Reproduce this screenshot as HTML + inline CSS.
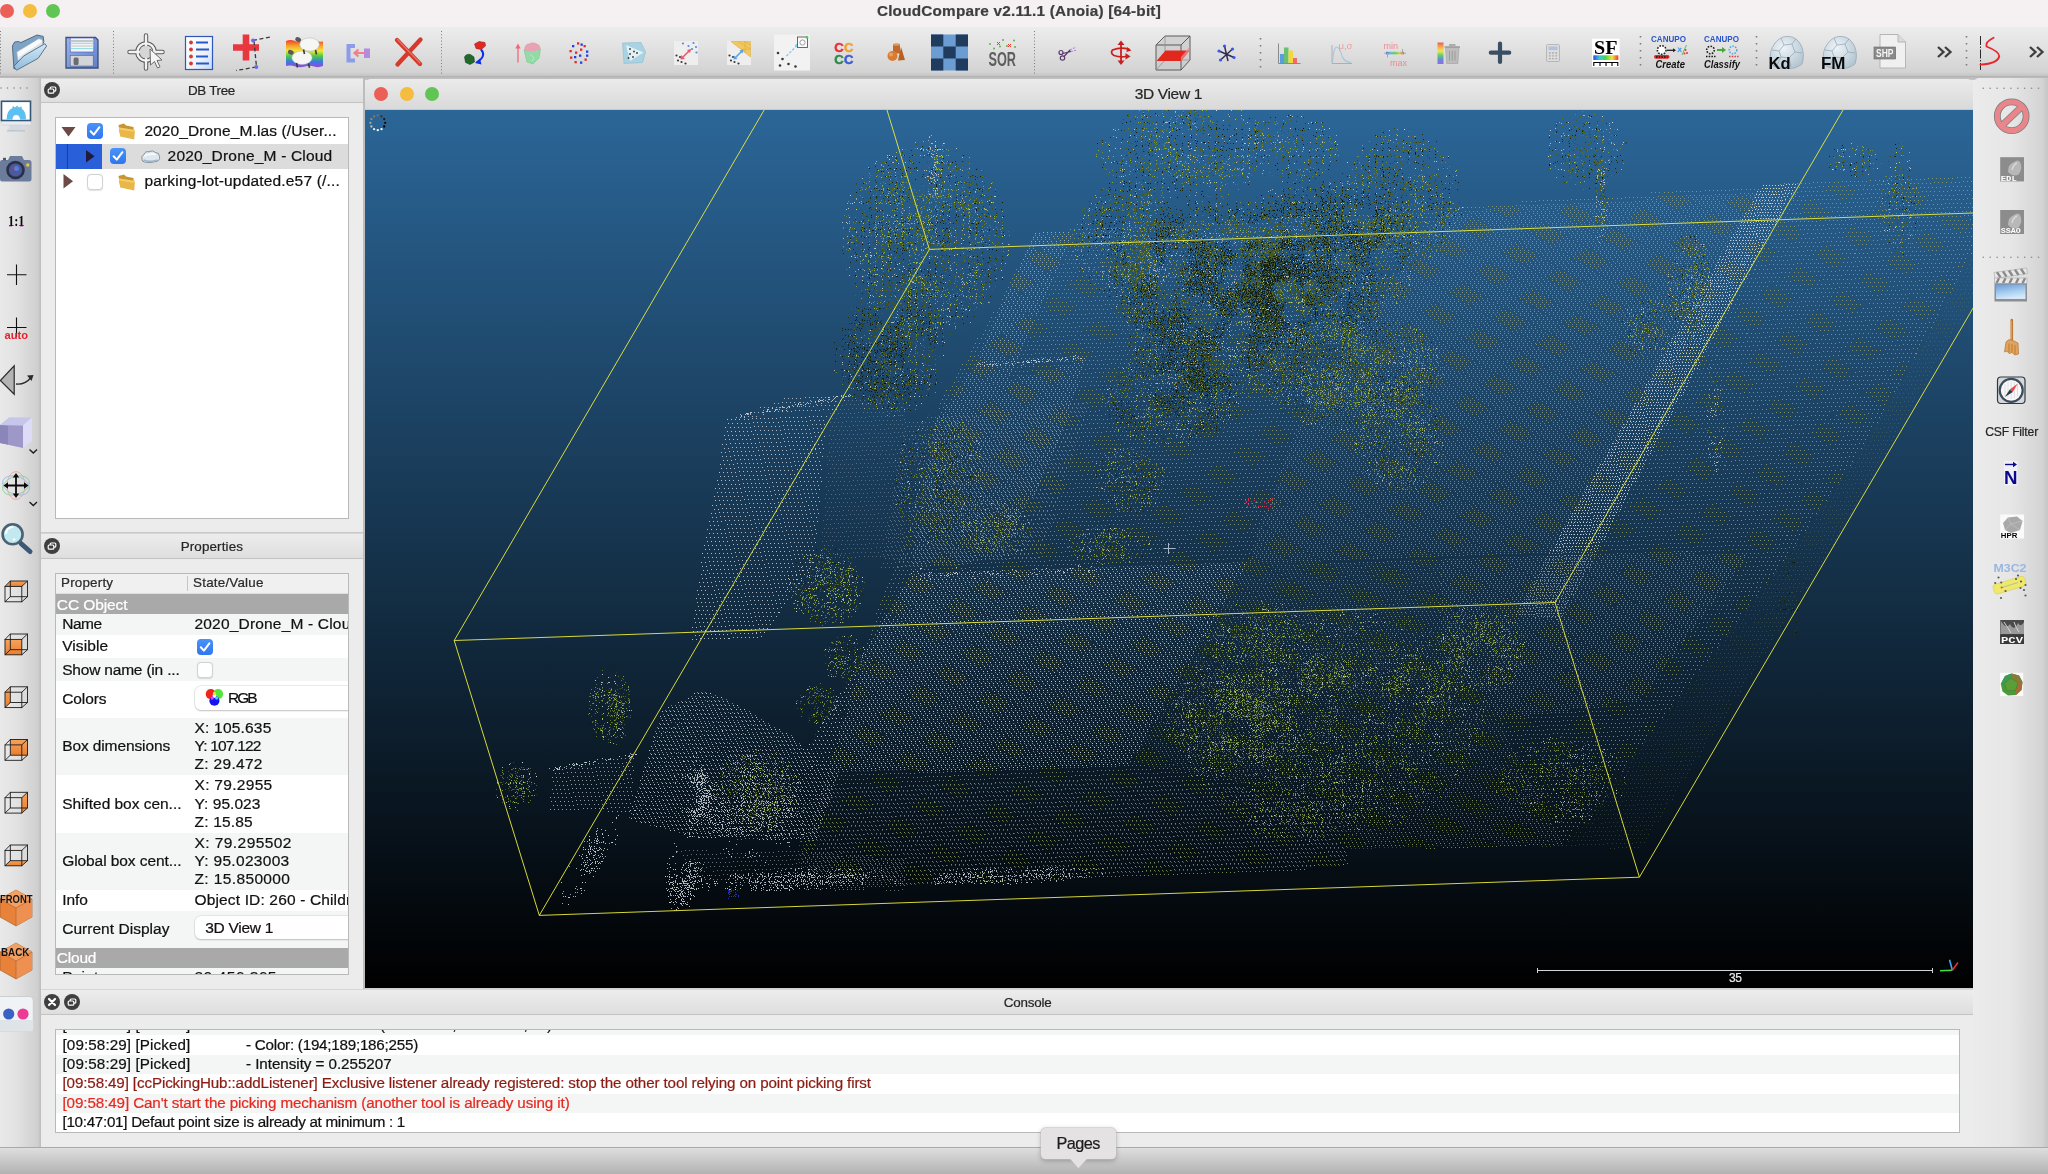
<!DOCTYPE html>
<html><head><meta charset="utf-8"><title>CloudCompare</title>
<style>
html,body{margin:0;padding:0;width:2048px;height:1174px;overflow:hidden;background:#ececec;font-family:"Liberation Sans",sans-serif;color:#1a1a1a;}
*{box-sizing:border-box;}
.abs{position:absolute;}
#titlebar{left:0;top:0;width:2048px;height:27px;background:#f5f0f2;}
#title{left:0;top:0;width:2048px;height:22px;line-height:21px;text-align:center;font-weight:bold;font-size:15.5px;color:#3c3c3c;padding-left:-12px;}
.tl{position:absolute;width:14px;height:14px;border-radius:50%;}
#toolbar{left:0;top:27px;width:2048px;height:50px;background:linear-gradient(#ececec 0%,#e2e2e2 40%,#d3d3d3 92%,#c4c4c4 100%);border-bottom:1px solid #b4b4b4;}
#lefttb{left:0;top:78px;width:41px;height:1069px;background:linear-gradient(90deg,#e9e9e9 0%,#e2e2e2 40%,#cfcfcf 92%,#bdbdbd 100%);}
#righttb{left:1974px;top:78px;width:74px;height:1069px;border-radius:5px 0 0 0;background:linear-gradient(90deg,#ebebeb 0%,#e6e6e6 50%,#d4d4d4 92%,#c6c6c6 100%);}
#statusbar{left:0;top:1147px;width:2048px;height:27px;background:linear-gradient(#dedede,#b2b2b2);border-top:1px solid #a9a9a9;}
.docktitle{position:absolute;background:linear-gradient(#ededed,#dedede);border-bottom:1px solid #c3c3c3;border-top:1px solid #d6d6d6;font-size:13px;text-align:center;color:#2a2a2a;}
.dockbtn{position:absolute;width:16px;height:16px;border-radius:50%;background:#3f3f3f;}
.box{position:absolute;background:#fff;border:1px solid #b9b9b9;overflow:hidden;}
.t{position:absolute;white-space:nowrap;line-height:1;}
.cb{position:absolute;width:16px;height:16px;border-radius:4px;}
.cb.on{background:linear-gradient(#4a93f8,#2f76f0);}
.cb.off{background:#fff;border:1px solid #d2d2d2;box-shadow:0 0.5px 1px rgba(0,0,0,.12);}
.row{position:absolute;left:0;width:292px;}
.g{background:#f4f5f5;}
.band{background:#a9a9a9;color:#fff;}
.crow{position:absolute;left:0;width:1903px;height:19.5px;}
.p{font-size:15px;color:#111;}.c{font-size:13.5px;color:#111;}</style></head>
<body>
<!-- TITLE BAR -->
<div id="titlebar" class="abs"></div>
<div class="tl" style="left:0px;top:4px;background:#ec5f57;"></div>
<div class="tl" style="left:23px;top:4px;background:#f5bd40;"></div>
<div class="tl" style="left:46px;top:4px;background:#61c554;"></div>
<!-- TOOLBAR -->
<div id="toolbar" class="abs"></div>
<svg class="abs" style="left:0;top:27px;will-change:transform" width="2048" height="50" viewBox="0 27 2048 50" font-family="Liberation Sans, sans-serif">
<defs>
<linearGradient id="gFold" x1="0" y1="0" x2="0" y2="1"><stop offset="0" stop-color="#d4e8f6"/><stop offset="1" stop-color="#8fbcdc"/></linearGradient>
<linearGradient id="gSave" x1="0" y1="0" x2="1" y2="1"><stop offset="0" stop-color="#9ab6ea"/><stop offset="1" stop-color="#5d7fc8"/></linearGradient>
<linearGradient id="gRain" x1="0" y1="0" x2="0" y2="1"><stop offset="0" stop-color="#f03a30"/><stop offset="0.2" stop-color="#f59a28"/><stop offset="0.4" stop-color="#f2e63a"/><stop offset="0.6" stop-color="#48c848"/><stop offset="0.8" stop-color="#3a78e8"/><stop offset="1" stop-color="#9a48d8"/></linearGradient>
<linearGradient id="gRainH" x1="0" y1="0" x2="1" y2="0"><stop offset="0" stop-color="#3a48e8"/><stop offset="0.25" stop-color="#38c8d8"/><stop offset="0.5" stop-color="#48d848"/><stop offset="0.75" stop-color="#f2e63a"/><stop offset="1" stop-color="#f03a30"/></linearGradient>
<radialGradient id="gBlob" cx="0.4" cy="0.35" r="0.7"><stop offset="0" stop-color="#eef4f8"/><stop offset="1" stop-color="#b4c6d2"/></radialGradient>
<linearGradient id="gList" x1="0" y1="0" x2="1" y2="1"><stop offset="0" stop-color="#ffffff"/><stop offset="0.6" stop-color="#eef3fc"/><stop offset="1" stop-color="#c4d8f6"/></linearGradient>
</defs>
<!-- separators (dotted) -->
<g stroke="#7a7a7a" stroke-width="1" stroke-dasharray="1 2.2">
<path d="M0.5 31 V75"/><path d="M113.5 31 V75"/><path d="M441.5 31 V75"/><path d="M1034.5 31 V75"/>
</g>
<g stroke="#7a7a7a" stroke-width="1.6" stroke-dasharray="1.6 5.4">
<path d="M1260.5 38 V69"/><path d="M1640.5 36 V70"/><path d="M1756.5 36 V70"/><path d="M1966.5 36 V70"/>
</g>
<!-- 1 open folder -->
<g>
<path d="M12.4 46 L14.6 42 L18.5 41.5 L20.8 42.6 L37 35 L43.2 36.4 L43.8 41.5 L42 46 L14 69 Z" fill="#7da3c6" stroke="#4a6078" stroke-width="0.9" stroke-linejoin="round"/>
<path d="M16.8 52.1 L38.7 38.7 L42.1 39.8 L42.7 44.8 L18 60.6 Z" fill="#fafbfc" stroke="#aab4be" stroke-width="0.5"/>
<path d="M18 57.5 L41.5 42.3 L42.7 44.8 L18 60.6 Z" fill="#dfe3e8"/>
<path d="M15.7 69.6 L14 66.2 L23.6 56 L44.9 43.7 L46.6 46 L38.2 58.3 L16.8 70.1 Z" fill="url(#gFold)" stroke="#4a6a88" stroke-width="0.9" stroke-linejoin="round"/>
</g>
<!-- 2 save floppy -->
<g>
<path d="M66 37.5 H95.5 L98 40 V68 H66 Z" fill="url(#gSave)" stroke="#3d4c7c" stroke-width="1.3"/>
<rect x="70.2" y="38" width="23.6" height="14" fill="#f2f4f6" stroke="#5a62c8" stroke-width="0.7"/>
<path d="M70.6 41 H93.4" stroke="#c4c8cc" stroke-width="2"/><path d="M70.6 43.3 H93.4 M70.6 48.6 H93.4" stroke="#86d6e2" stroke-width="0.9"/><path d="M70.6 46 H93.4" stroke="#d4d6d8" stroke-width="1.6"/>
<rect x="70.2" y="55.500" width="23" height="10.500" fill="#d2d4d8" stroke="#5a6484" stroke-width="0.6"/>
<rect x="73.6" y="57.400" width="5" height="7.600" rx="1.5" fill="#6a6c74"/>
</g>
<!-- 3 pick point -->
<g fill="none">
<path d="M146 35.5 V68.5 M129.5 52 H162.5" stroke="#5c5c5c" stroke-width="4.4" stroke-linecap="round"/>
<circle cx="146" cy="52" r="8.6" stroke="#5c5c5c" stroke-width="4.4"/>
<path d="M146 35.5 V68.5 M129.5 52 H162.5" stroke="#f2f2f2" stroke-width="2.4" stroke-linecap="round"/>
<circle cx="146" cy="52" r="8.6" stroke="#f2f2f2" stroke-width="2.4"/>
<circle cx="146" cy="52" r="6.2" fill="#d6d6d6" stroke="none"/>
<path d="M150 49 L150.5 65 L154.5 61.5 L157.5 68 L160 66.8 L157 60.5 L162 60 Z" fill="#f6f6f6" stroke="#6a6a6a" stroke-width="1"/>
</g>
<!-- 4 list -->
<g>
<rect x="185.5" y="36.5" width="27" height="33" fill="url(#gList)" stroke="#2f57b8" stroke-width="1.2"/>
<g fill="#d83a2a"><circle cx="191" cy="42.5" r="1.9"/><circle cx="191" cy="49.5" r="1.9"/><circle cx="191" cy="56.5" r="1.9"/><circle cx="191" cy="63.5" r="1.9"/></g>
<path d="M196 42.5 H208 M196 49.5 H209 M196 56.5 H208 M196 63.5 H209" stroke="#2857c8" stroke-width="2.2"/>
</g>
<!-- 5 red plus polyline -->
<g>
<path d="M246 34.5 V60.5 M233 47.5 H259" stroke="#e8373f" stroke-width="6.6"/>
<path d="M253 40.5 L270 37 M254 41 L256.5 67 L236 70.5" stroke="#3a3a3a" stroke-width="1.3" stroke-dasharray="4 2.6" fill="none"/>
<circle cx="253" cy="40.5" r="2" fill="#6a6af0"/><circle cx="256.3" cy="67" r="2" fill="#6a6af0"/>
</g>
<!-- 6 sheep rainbow -->
<g>
<path d="M286 41 Q290.500 39 295 41 T304 41 T313 40.500 T323 41.500 V66 Q318.500 68 314 66.500 T305 66.500 T295.500 66.500 T286 66 Z" fill="url(#gRain)"/>
<g fill="#f6f6f4" stroke="#b8b8b4" stroke-width="0.5">
<ellipse cx="309.500" cy="44.500" rx="9.800" ry="6.600"/><ellipse cx="302" cy="57.700" rx="10.200" ry="6.800"/>
</g>
<ellipse cx="298.200" cy="39.600" rx="3" ry="2.300" fill="#5a5a5a" transform="rotate(25 298.2 39.6)"/><ellipse cx="290.800" cy="52.300" rx="3" ry="2.300" fill="#5a5a5a" transform="rotate(25 290.8 52.3)"/>
<path d="M303.500 49.500 L304.500 54 M315.500 50 L316.500 54.500 M296.500 63 L297.500 67.500 M308.500 63.500 L309.500 67.800" stroke="#3a3a3a" stroke-width="1.600"/>
</g>
<!-- 7 merge -->
<g>
<path d="M355 44 H346.5 V62.5 H355 V58.5 H350.5 V48 H355 Z" fill="#8b9cea"/>
<rect x="364" y="48.5" width="6" height="9.5" fill="#b18be4"/>
<path d="M365 53 H355 M358.5 49.5 L354.5 53 L358.5 56.5" stroke="#ee7f8f" stroke-width="2.2" fill="none"/>
</g>
<!-- 8 red X -->
<g stroke="#d63a2c" stroke-width="4.4" stroke-linecap="round"><path d="M397 40 L420 64"/><path d="M420.5 39.5 L397.5 64.5"/></g>
<g stroke="#f08a78" stroke-width="1.2" stroke-linecap="round" opacity=".7"><path d="M397.5 39.5 L420 63"/></g>
<!-- 9 blobs -->
<g>
<path d="M474.5 44 L479 41.5 L485 42.5 L485.5 46 L481 49.5 L476 48.5 Z" fill="#e02a20" stroke="#8a1410" stroke-width="0.5"/>
<path d="M464.5 57 Q466 53.5 470.5 54.5 L474 57 L474.5 62 L470 64.5 L465.5 62.5 Z" fill="#1f6a2a" stroke="#0e3a14" stroke-width="0.5"/>
<path d="M481 49.5 Q487 56 476.5 62.5" stroke="#1030e8" stroke-width="2" fill="none"/>
<path d="M480 58.5 L475 63 L481.5 64.5 Z" fill="#1030e8"/>
</g>
<!-- 10 normals -->
<g>
<path d="M518 62.5 V45" stroke="#ee6a78" stroke-width="1.3"/><path d="M515.3 48.5 L518 43.5 L520.7 48.5 Z" fill="#ee6a78"/>
<path d="M524 50 L540.5 49 L539 58 L533 64 L527 62 Z" fill="#93dba6" stroke="#6cc488" stroke-width="0.5"/>
<path d="M524 50 Q524.5 44 529 43.5 Q533 41.5 536.5 43.5 Q540.5 44.5 540.5 49 Q533 53 524 50 Z" fill="#e8a2b4"/>
<path d="M530 54 L534 58 L532 61" stroke="#bfeccb" stroke-width="0.8" fill="none"/>
</g>
<!-- 11 dots circle -->
<g>
<g fill="#e42a20"><rect x="577" y="42.3" width="2.3" height="2.3"/><rect x="569.5" y="50" width="2.3" height="2.3"/><rect x="570" y="56.5" width="2.3" height="2.3"/><rect x="574.5" y="61" width="2.3" height="2.3"/><rect x="584.5" y="58.5" width="2.3" height="2.3"/><rect x="580" y="48.5" width="2.3" height="2.3"/><rect x="575" y="51.5" width="2.3" height="2.3"/><rect x="583.5" y="45" width="2.3" height="2.3"/></g>
<g fill="#2040e8"><rect x="572" y="45" width="2.3" height="2.3"/><rect x="580.5" y="43.5" width="2.3" height="2.3"/><rect x="586" y="50.5" width="2.3" height="2.3"/><rect x="586" y="54.5" width="2.3" height="2.3"/><rect x="580" y="61.5" width="2.3" height="2.3"/><rect x="574" y="56" width="2.3" height="2.3"/><rect x="579" y="54.5" width="2.3" height="2.3"/></g>
</g>
<!-- 12 light blue mesh -->
<g>
<path d="M622.5 43 L641 42.5 L645.5 52 L642.5 62.5 L624 63.5 Z" fill="#a9d2e2" stroke="#8cbcd0" stroke-width="0.6"/>
<path d="M626 45 L643.5 52.5 L630 61 Z" fill="#e4f2f8"/>
<g fill="#3a3a3a"><circle cx="630" cy="49" r="0.9"/><circle cx="634" cy="51.5" r="0.9"/><circle cx="630" cy="54" r="0.9"/><circle cx="637" cy="53" r="0.9"/><circle cx="633" cy="57" r="0.9"/><circle cx="628.5" cy="58" r="0.9"/></g>
</g>
<!-- 13 points red arrow -->
<g>
<rect x="674" y="41" width="24" height="24" fill="#eeeeee"/>
<g fill="#5a8ad8"><circle cx="683" cy="43.5" r="1.1"/><circle cx="688.5" cy="46" r="1.1"/><circle cx="693.5" cy="43" r="1.1"/><circle cx="692" cy="49" r="1.1"/><circle cx="696" cy="47" r="1.1"/><circle cx="696.5" cy="52.5" r="1.1"/></g>
<g fill="#3a3a3a"><circle cx="676.5" cy="55.5" r="1.1"/><circle cx="678" cy="60.5" r="1.1"/><circle cx="681.5" cy="62" r="1.1"/><circle cx="685.5" cy="63.5" r="1.1"/><circle cx="680" cy="57" r="1.1"/></g>
<path d="M682 58 L690 50" stroke="#e85a6a" stroke-width="1.6"/><path d="M687 50 L691 49 L690 53 Z M681 55 L680.5 59.5 L685 59 Z" fill="#e85a6a"/>
</g>
<!-- 14 points yellow mesh -->
<g>
<rect x="727" y="41" width="24" height="24" fill="#eeeeee"/>
<path d="M731 41.5 L750.5 41.5 L750.5 57 Z" fill="#f2c75c" stroke="#d6a63a" stroke-width="0.5"/>
<path d="M738 41.5 L750.5 49 M744 41.5 L750.5 45 M741 49.5 L750.5 49 M745 41.5 L745 53" stroke="#d6a63a" stroke-width="0.5"/>
<g fill="#3a3a3a"><circle cx="729.5" cy="55.5" r="1.1"/><circle cx="731" cy="60.5" r="1.1"/><circle cx="734.5" cy="62" r="1.1"/><circle cx="738.5" cy="63.5" r="1.1"/><circle cx="733" cy="57" r="1.1"/></g>
<path d="M735 58 L742 51" stroke="#5aa2e0" stroke-width="1.6"/><path d="M739.5 50.5 L743.5 49.5 L742.5 53.5 Z M734 55.5 L733.5 59.5 L737.5 59 Z" fill="#5aa2e0"/>
</g>
<!-- 15 points white bg -->
<g>
<rect x="774" y="34.5" width="36" height="36" fill="#f2f2f2"/>
<g fill="#3a3a3a"><circle cx="778" cy="53" r="1.3"/><circle cx="782.5" cy="59" r="1.3"/><circle cx="780" cy="65.5" r="1.3"/><circle cx="788.5" cy="64" r="1.3"/><circle cx="795.5" cy="66.5" r="1.3"/></g>
<path d="M786.5 56 L796 46.5" stroke="#8ac4e6" stroke-width="1.3" stroke-dasharray="2.5 1.6"/>
<circle cx="797" cy="45.5" r="1.8" fill="#7ad0e6"/>
<rect x="797.5" y="37" width="10" height="10.5" fill="#fafafa" stroke="#5a5a5a" stroke-width="0.9"/>
<circle cx="802.5" cy="42.5" r="2.6" fill="none" stroke="#8a8a8a" stroke-width="0.8"/><circle cx="807" cy="37.5" r="1.4" fill="#58c868"/>
</g>
<!-- 16 CC CC -->
<g font-weight="bold" font-size="13" letter-spacing="0.3" stroke-width="0.5">
<text x="834.2" y="52"><tspan fill="#e8303a" stroke="#e8303a">C</tspan><tspan fill="#f2a032" stroke="#f2a032">C</tspan></text>
<text x="834.2" y="63.6"><tspan fill="#2e8a4a" stroke="#2e8a4a">C</tspan><tspan fill="#3a5ad8" stroke="#3a5ad8">C</tspan></text>
</g>
<!-- 17 primitives -->
<g>
<path d="M893 44.5 h7 v9 h-7 Z" fill="#c46a28"/><ellipse cx="896.5" cy="44.5" rx="3.5" ry="1.3" fill="#e09a5a"/>
<path d="M898 60.5 L901 47 L905 60 Z" fill="#b8601e"/>
<circle cx="892.5" cy="56" r="5" fill="#d87c34"/><circle cx="891" cy="54.5" r="2" fill="#eaa260"/>
</g>
<!-- 18 checkerboard -->
<g>
<rect x="931" y="34.5" width="37" height="36" fill="#6c9dd2"/>
<g fill="#1f3b5e"><rect x="931" y="34.5" width="12.3" height="12"/><rect x="955.7" y="34.5" width="12.3" height="12"/><rect x="943.3" y="46.5" width="12.4" height="12"/><rect x="931" y="58.5" width="12.3" height="12"/><rect x="955.7" y="58.5" width="12.3" height="12"/></g>
</g>
<!-- 19 SOR -->
<g>
<text x="988.5" y="66" font-weight="bold" font-size="19.5" fill="#5e5e5e" textLength="27.5" lengthAdjust="spacingAndGlyphs" transform="translate(0,0)">SOR</text>
<g fill="#5ab848"><circle cx="990" cy="44" r="1"/><circle cx="994" cy="48.5" r="1"/><circle cx="1003" cy="40" r="1"/><circle cx="1007" cy="46" r="1"/><circle cx="1014" cy="40.5" r="1"/><circle cx="1015" cy="47" r="1"/><circle cx="1000" cy="46.5" r="1"/></g>
<path d="M997 42 l3 3 m0 -3 l-3 3 M1008 44 l3 3 m0 -3 l-3 3" stroke="#e03a30" stroke-width="1"/>
</g>
<!-- 20 scissors -->
<g stroke="#5a3a6e" stroke-width="1.2" fill="none">
<circle cx="1061" cy="52.5" r="2"/><circle cx="1062.5" cy="58" r="2.2"/>
<path d="M1062.5 53.5 L1071 51.5 M1064 56.5 L1070 50"/>
<path d="M1070 50 L1076 47 M1071 51.5 L1077 50" stroke="#b08ad0" stroke-dasharray="2 1.2"/>
</g>
<!-- 21 rotate arrows -->
<g stroke="#cc1e1e" fill="none" stroke-width="1.8">
<path d="M1121 43 V62"/>
<path d="M1129.5 49.5 Q1121 46.5 1112.5 50 Q1110 53 1114 55.5 Q1121 58 1127 56"/>
<path d="M1109.5 52.5 H1132.5" stroke-width="0" />
</g>
<g fill="#cc1e1e"><path d="M1117.5 45 L1121 40.5 L1124.500 45 Z"/><path d="M1117.500 60.500 L1121 65 L1124.500 60.500 Z"/><path d="M1125.500 53 L1130.500 56.500 L1125.500 59.500 Z"/><path d="M1127 47 L1131.5 50.5 L1126.5 52 Z"/></g>
<!-- 22 box red plane -->
<g>
<path d="M1156 45 L1165 36 L1190 36 L1190 60 L1181 70 L1156 70 Z" fill="#c8c8c8" fill-opacity=".65" stroke="#5a5a5a" stroke-width="1"/>
<path d="M1156 45 H1181 V70 M1181 45 L1190 36" stroke="#5a5a5a" stroke-width="1" fill="none"/>
<path d="M1165 36 V60 H1190 M1165 60 L1156 70" stroke="#8a8a8a" stroke-width="0.7" fill="none"/>
<path d="M1156.5 61 L1165.500 50.500 L1189.500 50.500 L1181 61 Z" fill="#e2281e"/>
<path d="M1181 61 L1189.500 50.500 L1189.500 47 L1181 57 Z" fill="#e88a86" opacity=".8"/>
</g>
<!-- 23 blue star -->
<g>
<path d="M1219 51 L1234 57.5 M1224.5 46 L1228 61 M1232.500 49 L1220.500 60" stroke="#2e2e52" stroke-width="1.5"/>
<g fill="#3a55f0"><circle cx="1219" cy="51" r="1.6"/><circle cx="1234" cy="57.5" r="1.6"/><circle cx="1224.5" cy="46" r="1.6"/><circle cx="1220.5" cy="60" r="1.6"/><circle cx="1232.5" cy="49" r="1.6"/></g>
</g>
<!-- 24 histogram -->
<g>
<path d="M1278.5 43.5 V63.5 H1300.5" stroke="#8a8a8a" stroke-width="1" fill="none"/>
<rect x="1280" y="54" width="4" height="9" fill="#5a9ee0"/><rect x="1284" y="47.500" width="4.5" height="15.5" fill="#68c070"/><rect x="1288.5" y="50.500" width="4.5" height="12.500" fill="#f0d840"/><rect x="1293" y="58" width="4" height="5" fill="#f06a6a"/>
</g>
<!-- 25 mu sigma -->
<g opacity=".75">
<path d="M1332 45 V63.5 H1352" stroke="#a0a0a0" stroke-width="1" fill="none"/>
<path d="M1332.500 62 Q1334 46 1337 47 Q1340 48 1342 56 Q1344 62 1351 62.500" stroke="#90c0e0" stroke-width="1.1" fill="none"/>
<text x="1338.500" y="49" font-size="9.500" fill="#f08a8a">μ,σ</text>
</g>
<!-- 26 min max -->
<g opacity=".85">
<text x="1383.500" y="48.500" font-size="9" fill="#f07a86">min</text>
<text x="1390" y="65.500" font-size="9" fill="#f07a86">max</text>
<rect x="1386" y="51.8" width="18" height="2.6" fill="url(#gRainH)"/>
<path d="M1384 53.200 H1406 M1387.500 53 V57.500 M1402.500 49 V53" stroke="#9a9a9a" stroke-width="0.9"/>
</g>
<!-- 27 gradient / trash -->
<g opacity=".8">
<rect x="1437.500" y="42.500" width="6" height="21.500" fill="url(#gRain)"/>
<path d="M1445.500 47.500 H1459 L1457.800 63.500 H1446.700 Z" fill="#b4b4b4" stroke="#909090" stroke-width="0.6"/>
<path d="M1444.500 47 H1460 M1449 45 H1455.500" stroke="#8a8a8a" stroke-width="1.4"/>
<path d="M1449.500 51 V60.500 M1452.300 51 V60.500 M1455 51 V60.500" stroke="#8e8e8e" stroke-width="1"/>
</g>
<!-- 28 plus -->
<path d="M1500 43.500 V62 M1490.800 52.700 H1509.200" stroke="#3a4f62" stroke-width="4.200" stroke-linecap="round"/>
<!-- 29 calculator -->
<g opacity=".9">
<rect x="1546.500" y="44.500" width="13" height="17" rx="1.2" fill="#dcdcdc" stroke="#a8a8a8" stroke-width="0.8"/>
<rect x="1548.500" y="46.500" width="9" height="3.500" fill="#a8c0e0"/>
<path d="M1549 53 h8 M1549 55.800 h8 M1549 58.600 h8" stroke="#a0a0a0" stroke-width="1.300" stroke-dasharray="1.600 1.600"/>
</g>
<!-- 30 SF -->
<g>
<rect x="1592" y="38.700" width="27.600" height="28.300" fill="#ffffff"/>
<text x="1594" y="54.300" font-family="Liberation Serif, serif" font-weight="bold" font-size="19.500" fill="#000" textLength="23.500" lengthAdjust="spacingAndGlyphs">SF</text>
<rect x="1593.300" y="55.300" width="25" height="4.700" fill="url(#gRainH)"/>
<path d="M1593.300 62.500 H1618.300 M1593.800 62 V66 M1600 62 V66 M1606 62 V66 M1612 62 V66 M1617.800 62 V66" stroke="#000" stroke-width="1.100"/>
</g>
<!-- 31 CANUPO Create -->
<g>
<text x="1651" y="42.400" font-weight="bold" font-size="9.500" fill="#2b55c8" textLength="35" lengthAdjust="spacingAndGlyphs">CANUPO</text>
<circle cx="1661.700" cy="50" r="4.300" fill="#fff" stroke="#222" stroke-width="1.600" stroke-dasharray="1.600 1.300"/>
<rect x="1654" y="55" width="15.500" height="3.800" rx="1.800" fill="#e02a2a"/><path d="M1656 57 h11.500" stroke="#111" stroke-width="1.500" stroke-dasharray="1.500 1.200"/>
<path d="M1667 50.300 H1674.500" stroke="#222" stroke-width="1.300"/><path d="M1673 48.300 L1676 50.300 L1673 52.300 Z" fill="#222"/>
<path d="M1678 47.500 l3.500 4.500 m-3.800 0 l3.600 -4.200" stroke="#4a9ae8" stroke-width="1.200"/><path d="M1682 55 L1686.500 45" stroke="#58b848" stroke-width="0.900"/>
<g fill="#e03a3a"><circle cx="1685.500" cy="50" r="1"/><circle cx="1687" cy="53" r="1"/><circle cx="1684.500" cy="53.500" r="1"/></g>
<text x="1655.500" y="68.300" font-weight="bold" font-style="italic" font-size="11.500" fill="#111" textLength="29.500" lengthAdjust="spacingAndGlyphs">Create</text>
</g>
<!-- 32 CANUPO Classify -->
<g>
<text x="1704" y="42.400" font-weight="bold" font-size="9.500" fill="#2b55c8" textLength="35" lengthAdjust="spacingAndGlyphs">CANUPO</text>
<circle cx="1710.500" cy="50" r="3.800" fill="none" stroke="#222" stroke-width="1.600" stroke-dasharray="1.600 1.300"/>
<path d="M1706 56.500 h9.500" stroke="#111" stroke-width="1.500" stroke-dasharray="1.500 1.200"/>
<path d="M1717 50 H1723" stroke="#48a838" stroke-width="2"/><path d="M1722 47 L1726 50 L1722 53 Z" fill="#48a838"/>
<circle cx="1733" cy="50" r="3.800" fill="none" stroke="#4aa8e8" stroke-width="1.500" stroke-dasharray="1.500 1.300"/>
<path d="M1729 56.500 h9.500" stroke="#e03a3a" stroke-width="1.500" stroke-dasharray="1.500 1.200"/>
<text x="1704" y="68.300" font-weight="bold" font-style="italic" font-size="11.500" fill="#111" textLength="36" lengthAdjust="spacingAndGlyphs">Classify</text>
</g>
<!-- 33 Kd -->
<g id="blob">
<path d="M1771 64 Q1768 52 1775 43 Q1781 35.500 1789 36.500 Q1797 37 1801.500 46 Q1805 55 1802 64 Q1795 69.500 1786 68.500 Q1776 69 1771 64 Z" fill="url(#gBlob)" stroke="#8fa3b0" stroke-width="0.700"/>
<path d="M1781 38 L1784 45 L1779 51 L1772 50 M1784 45 L1792 44 L1796 39 M1792 44 L1795 52 L1802 53 M1795 52 L1789 58 L1781 57 L1779 51 M1789 58 L1791 67 M1781 57 L1777 65" stroke="#8fa3b0" stroke-width="0.700" fill="none"/>
</g>
<text x="1768.500" y="69" font-weight="bold" font-size="17" fill="#0a0a0a" textLength="22" lengthAdjust="spacingAndGlyphs">Kd</text>
<!-- 34 FM -->
<use href="#blob" x="53"/>
<text x="1821" y="69" font-weight="bold" font-size="17" fill="#0a0a0a" textLength="24.500" lengthAdjust="spacingAndGlyphs">FM</text>
<!-- 35 SHP -->
<g>
<path d="M1880 34.500 H1898 L1905.500 42 V68 H1880 Z" fill="#f0f0f0" stroke="#b0b0b0" stroke-width="0.900"/>
<path d="M1898 34.500 V42 H1905.500" fill="#dadada" stroke="#b0b0b0" stroke-width="0.900"/>
<rect x="1874" y="47" width="21.700" height="12" fill="#8a8a8a" stroke="#6a6a6a" stroke-width="0.600"/>
<text x="1876" y="57" font-weight="bold" font-size="10.500" fill="#f6f6f6" textLength="17.500" lengthAdjust="spacingAndGlyphs">SHP</text>
</g>
<!-- 36 chevrons -->
<g stroke="#3e3e3e" stroke-width="2.300" fill="none" stroke-linejoin="miter">
<path d="M1938 47 L1943.500 52 L1938 57 M1945 47 L1950.500 52 L1945 57"/>
<path d="M2030 47 L2035.500 52 L2030 57 M2037 47 L2042.500 52 L2037 57"/>
</g>
<!-- 37 red S -->
<path d="M1980.5 36 V70" stroke="#2a2a2a" stroke-width="1" stroke-dasharray="9 1.500 1.500 1.500"/>
<path d="M1993.6 37.8 Q1985 42 1986.5 46.5 Q1999 51.5 1999.3 56 Q1998 63.500 1980.5 64.700" stroke="#e8262a" stroke-width="1.800" fill="none" stroke-linecap="round"/>
</svg>

<div class="abs" style="left:0;top:77px;width:2048px;height:2.5px;background:linear-gradient(#b9b9b9,#c6c6c6);"></div>
<!-- LEFT TOOLBAR -->
<div id="lefttb" class="abs"></div>
<svg class="abs" style="left:0;top:77px;will-change:transform" width="48" height="1070" viewBox="0 77 48 1070" font-family="Liberation Sans, sans-serif">
<defs>
<g id="wcube" fill="none" stroke="#1c1c1c" stroke-width="0.9">
<rect x="5" y="5.400" width="16.800" height="15.400"/><rect x="10.300" y="0" width="17.200" height="15.700"/>
<path d="M5 5.400 L10.300 0 M21.800 5.400 L27.500 0 M5 20.800 L10.300 15.700 M21.800 20.800 L27.500 15.700"/>
</g>
<linearGradient id="gOr" x1="0" y1="0" x2="0" y2="1"><stop offset="0" stop-color="#f6a25c"/><stop offset="1" stop-color="#e97f2e"/></linearGradient>
<g id="ocube">
<path d="M16 0 L32 9 L32 27 L16 36 L0 27 L0 9 Z" fill="#e8813a" stroke="#9a5a2a" stroke-width="0.600"/>
<path d="M16 0 L32 9 L16 18 L0 9 Z" fill="#f2a064"/>
<path d="M16 18 L32 9 L32 27 L16 36 Z" fill="#ee9052"/>
<path d="M16 18 V36 M0 9 L16 18 L32 9" stroke="#a8622e" stroke-width="0.600" fill="none"/>
</g>
</defs>
<g fill="#8a8a8a"><circle cx="1" cy="88" r="0.800"/><circle cx="7.500" cy="88" r="0.800"/><circle cx="14" cy="88" r="0.800"/><circle cx="20.500" cy="88" r="0.800"/><circle cx="27" cy="88" r="0.800"/></g>
<!-- monitor -->
<g>
<path d="M10 125 H22 L24 130.500 H8 Z" fill="#d4dae0"/><rect x="7" y="130" width="18" height="1.500" fill="#c0c6cc"/>
<rect x="1" y="101" width="30" height="24" rx="1.500" fill="#e8ecf0" stroke="#c4cad0" stroke-width="0.500"/>
<rect x="1.500" y="101.300" width="29" height="19.200" fill="#fff" stroke="#34587a" stroke-width="1.600"/>
<path d="M6.500 119.500 Q7 110 12 108.500 L13 106 L15 107.500 L17 105.800 L19 107.500 L21.500 106.500 L22 109 Q26 111.500 26 119.500 Z" fill="#5cc0f0"/>
<path d="M12.500 119.800 Q12.500 115 16.200 115 Q20 115 20 119.800 Z" fill="#fff"/>
</g>
<!-- camera -->
<g>
<path d="M8 160 L10 156 H22 L24 160 H29 Q31.500 160 31.500 162.500 V179 Q31.500 181.500 29 181.500 H2 Q0 181.500 0 179 V162 Q0 160 2 160 Z" fill="#6c7c9c"/>
<rect x="3" y="157.800" width="3" height="2.500" fill="#4a5670"/>
<circle cx="15.500" cy="170" r="9.300" fill="#2a3048"/><circle cx="15.500" cy="170" r="6.600" fill="#4a5a9a"/><circle cx="16.500" cy="168.500" r="2.500" fill="#5a7ae0"/><circle cx="15" cy="169" r="0.900" fill="#e04a6a"/>
<circle cx="27.800" cy="165" r="1.700" fill="#f0c43a"/>
</g>
<!-- 1:1 -->
<text x="8" y="225.700" font-family="Liberation Serif, serif" font-weight="bold" font-size="14.500" fill="#0a0a0a" textLength="16.500" lengthAdjust="spacingAndGlyphs">1:1</text>
<path d="M9 226.200 h3 M20 226.200 h3" stroke="#c020c0" stroke-width="0.600"/>
<!-- plus -->
<path d="M16.500 264.500 V285 M7 274.700 H26.500" stroke="#111" stroke-width="1.100"/>
<!-- plus auto -->
<path d="M16.500 317.500 V337 M7 327.500 H26.500" stroke="#111" stroke-width="1.100"/>
<text x="4.500" y="339.200" font-weight="bold" font-size="11.500" fill="#e8202c" textLength="23.500" lengthAdjust="spacingAndGlyphs">auto</text>
<!-- triangle arrow -->
<path d="M0.300 380.500 L14.200 365.800 L14.200 394.200 Z" fill="#b4b4b4" stroke="#2a2a2a" stroke-width="1.200"/>
<path d="M16 384 Q25 385 31 377.500" stroke="#2a2a2a" stroke-width="1.300" fill="none"/><path d="M27 375.500 L33.500 375 L31.500 381 Z" fill="#2a2a2a"/>
<!-- purple cube -->
<g>
<path d="M0 425 L9 417.500 L32 417.500 L32 441 L23 448 L0 443 Z" fill="#d4d4f2"/>
<path d="M0 425 L9 417.500 L32 417.500 L23 425.500 Z" fill="#c6c6ea"/>
<path d="M23 425.500 L32 417.500 L32 441 L23 448 Z" fill="#dcdcf6"/>
<path d="M0 425 L23 425.500 L23 448 L0 443 Z" fill="#9d98c8"/>
<path d="M0 425 L8 426 V444.500 L0 443 Z" fill="#8a86ba"/>
</g>
<path d="M29.500 449.500 L33.300 453 L37 449.500" stroke="#1a1a1a" stroke-width="1.300" fill="none"/>
<!-- move arrows -->
<g>
<g fill="none" stroke-width="0.900" opacity=".75"><ellipse cx="16" cy="485.500" rx="9" ry="14" stroke="#f08a8a"/><ellipse cx="16" cy="485.500" rx="14" ry="9" stroke="#7ad07a" transform="rotate(-20 16 485.500)"/><ellipse cx="16" cy="485.500" rx="14" ry="9" stroke="#8ab0f0" transform="rotate(20 16 485.500)"/></g>
<path d="M16 476 V495 M6.500 485.500 H25.500" stroke="#0a0a0a" stroke-width="1.800"/>
<path d="M12.800 477.500 L16 473 L19.200 477.500 Z M12.800 493.500 L16 498 L19.200 493.500 Z M8 482.300 L3.500 485.500 L8 488.700 Z M24 482.300 L28.500 485.500 L24 488.700 Z" fill="#0a0a0a"/>
</g>
<path d="M29.500 502 L33.300 505.500 L37 502" stroke="#1a1a1a" stroke-width="1.300" fill="none"/>
<!-- magnifier -->
<g>
<path d="M21 543.500 L30 551.500" stroke="#3a5878" stroke-width="5" stroke-linecap="round"/>
<circle cx="12.600" cy="534.300" r="10" fill="#c2e8f0" stroke="#4a6274" stroke-width="2.600"/>
<path d="M6 533 Q7 527.500 12.500 527" stroke="#fff" stroke-width="2" fill="none" stroke-linecap="round"/><circle cx="14" cy="539.500" r="1.300" fill="#fff"/>
</g>
<!-- view cubes -->
<g transform="translate(0,581)"><path d="M5 5.400 L10.300 0 H27.500 L21.800 5.400 Z" fill="url(#gOr)"/><use href="#wcube"/></g>
<g transform="translate(0,634)"><rect x="5" y="5.400" width="16.800" height="15.400" fill="url(#gOr)"/><use href="#wcube"/></g>
<g transform="translate(0,686.800)"><path d="M5 5.400 L10.300 0 V15.700 L5 20.800 Z" fill="url(#gOr)"/><use href="#wcube"/></g>
<g transform="translate(0,739.500)"><rect x="10.300" y="0" width="17.200" height="15.700" fill="url(#gOr)"/><use href="#wcube"/></g>
<g transform="translate(0,792.300)"><path d="M21.800 5.400 L27.500 0 V15.700 L21.800 20.800 Z" fill="url(#gOr)"/><use href="#wcube"/></g>
<g transform="translate(0,845)"><path d="M5 20.800 L10.300 15.700 H27.500 L21.800 20.800 Z" fill="url(#gOr)"/><use href="#wcube"/></g>
<!-- FRONT / BACK -->
<use href="#ocube" x="0" y="890"/>
<text x="0" y="903" font-weight="bold" font-size="10.800" fill="#141414" textLength="32.500" lengthAdjust="spacingAndGlyphs">FRONT</text>
<use href="#ocube" x="0" y="943"/>
<text x="1" y="955.700" font-weight="bold" font-size="10.800" fill="#141414" textLength="28.500" lengthAdjust="spacingAndGlyphs">BACK</text>
<!-- flickr-like -->
<rect x="-4" y="996.500" width="37.300" height="35" rx="4" fill="#f0f3f6" stroke="#c4c8cc" stroke-width="0.800"/>
<path d="M-4 1020 h37.300 v8 q0 3.500 -4 3.500 h-33.300 Z" fill="#dfe4e8"/>
<circle cx="8.700" cy="1014" r="5.600" fill="#3a62c4"/><circle cx="23" cy="1014" r="5.600" fill="#ee3a92"/>
</svg>

<!-- RIGHT TOOLBAR -->
<div id="righttb" class="abs"></div>
<svg class="abs" style="left:1973px;top:77px;will-change:transform" width="75" height="700" viewBox="1973 77 75 700" font-family="Liberation Sans, sans-serif">
<defs>
<radialGradient id="gDep" cx="0.6" cy="0.45" r="0.5"><stop offset="0" stop-color="#c8c8c8"/><stop offset="1" stop-color="#8c8c8c"/></radialGradient>
<linearGradient id="gClap" x1="0" y1="0" x2="0.3" y2="1"><stop offset="0" stop-color="#6a9ad8"/><stop offset="0.6" stop-color="#a8cef0"/><stop offset="1" stop-color="#d4e8fa"/></linearGradient>
</defs>
<g fill="#8a8a8a" id="hdots"><circle cx="1983.300" cy="88.300" r="0.800"/><circle cx="1990.200" cy="88.300" r="0.800"/><circle cx="1997.100" cy="88.300" r="0.800"/><circle cx="2004" cy="88.300" r="0.800"/><circle cx="2010.900" cy="88.300" r="0.800"/><circle cx="2017.800" cy="88.300" r="0.800"/><circle cx="2024.700" cy="88.300" r="0.800"/><circle cx="2031.600" cy="88.300" r="0.800"/><circle cx="2038.500" cy="88.300" r="0.800"/></g>
<use href="#hdots" y="169"/>
<!-- no entry -->
<g>
<circle cx="2011.700" cy="116.200" r="14.400" fill="none" stroke="#7e7e7e" stroke-width="6.800"/>
<path d="M2001.500 126 L2022 106.500" stroke="#7e7e7e" stroke-width="7"/>
<circle cx="2011.700" cy="116.200" r="14.400" fill="none" stroke="#e8868c" stroke-width="5.200"/>
<path d="M2001.500 126 L2022 106.500" stroke="#e8868c" stroke-width="5.400"/>
</g>
<!-- EDL -->
<g>
<rect x="2000.200" y="157.200" width="23.800" height="24.200" fill="#8c8c8c"/>
<path d="M2008 172 Q2008 164 2014 162 Q2018 159 2020 162 Q2023 168 2019 174 Q2014 178 2008 172 Z" fill="#b8b8b8"/><path d="M2012 170 Q2013 165 2017 163" stroke="#d8d8d8" stroke-width="1.500" fill="none"/>
<text x="2000.800" y="180.600" font-family="Liberation Mono, monospace" font-weight="bold" font-size="7.500" fill="#fff" textLength="16" lengthAdjust="spacingAndGlyphs">EDL</text>
</g>
<!-- SSAO -->
<g>
<rect x="2000.200" y="210" width="23.800" height="24" fill="#8c8c8c"/>
<path d="M2008 225 Q2008 217 2014 215 Q2018 212 2020 215 Q2023 221 2019 227 Q2014 231 2008 225 Z" fill="#b8b8b8"/><path d="M2012 223 Q2013 218 2017 216" stroke="#d8d8d8" stroke-width="1.500" fill="none"/>
<text x="2000.800" y="233.300" font-family="Liberation Mono, monospace" font-weight="bold" font-size="7.500" fill="#fff" textLength="20" lengthAdjust="spacingAndGlyphs">SSAO</text>
</g>
<!-- clapper -->
<g>
<path d="M1994 272.500 L2026.500 268 L2027.500 273.500 L1995 278.500 Z" fill="#e8e8e8" stroke="#9a9a9a" stroke-width="0.500"/>
<path d="M1997 272.200 l3.500 5.300 M2003 271.300 l3.500 5.300 M2009 270.500 l3.500 5.300 M2015 269.700 l3.500 5.300 M2021 268.800 l3.500 5.300" stroke="#8a8a8a" stroke-width="2.400"/>
<rect x="1994.500" y="278" width="32.500" height="5.500" fill="#eaeaea" stroke="#9a9a9a" stroke-width="0.500"/>
<path d="M1999 278.300 l-2.500 5 M2005.500 278.300 l-2.500 5 M2012 278.300 l-2.500 5 M2018.500 278.300 l-2.500 5 M2025 278.300 l-2.500 5" stroke="#8a8a8a" stroke-width="2.400"/>
<rect x="1994.500" y="283.500" width="32.500" height="18" fill="#8e8e8e"/>
<rect x="1996" y="284.500" width="29.500" height="14.500" fill="url(#gClap)"/>
</g>
<!-- broom -->
<g>
<path d="M2011.800 320 V346" stroke="#c07a34" stroke-width="2.600" stroke-linecap="round"/><path d="M2011.300 321 V345" stroke="#e8b070" stroke-width="0.800"/>
<path d="M2006 342 Q2008.500 338.500 2012 340 L2018 343 L2018.500 354 L2015 355 L2012 352.500 L2009 353.500 L2007 351 L2004.500 352 Z" fill="#dfa45e" stroke="#b8722c" stroke-width="0.700"/>
<path d="M2009 343.500 V352 M2012 344 V352 M2015 345 V354" stroke="#b8722c" stroke-width="0.800"/>
</g>
<!-- compass -->
<g>
<rect x="1997.500" y="377" width="27.500" height="26.500" rx="3.500" fill="#d4d8dc" stroke="#2e3a46" stroke-width="1.200"/>
<circle cx="2011.200" cy="390.300" r="11.500" fill="#f8f8f8" stroke="#3e4c5a" stroke-width="2.200"/>
<path d="M2005 384 V396.500 M2008 382 V398.500 M2011.200 381.500 V399 M2014.400 382 V398.500 M2017.500 384 V396.500" stroke="#d0d4d8" stroke-width="0.700"/>
<path d="M2017.800 383.500 L2012.800 392 L2009.800 389.500 Z" fill="#e84a52"/><path d="M2004.800 397 L2009.800 389.500 L2012.800 392 Z" fill="#2e3a46"/>
</g>
<!-- N -->
<g>
<rect x="2004" y="461" width="13.500" height="24.500" fill="#f0f0f8"/>
<path d="M2005 464.500 H2015" stroke="#0a0a8a" stroke-width="1.400"/><path d="M2013 461.800 L2017 464.500 L2013 467.200 Z" fill="#0a0a8a"/>
<text x="2004" y="484" font-weight="bold" font-size="17.500" fill="#0a0a8a" textLength="13.500" lengthAdjust="spacingAndGlyphs">N</text>
</g>
<!-- HPR -->
<g>
<rect x="2000.200" y="514.500" width="23.800" height="24" fill="#fafafa"/>
<path d="M2003 523 L2008 517.500 L2017 516.500 L2022.500 521 L2020 530 L2011 533 L2005 530 Z" fill="#a8a8a8"/><path d="M2008 517.500 L2011 524 L2020 530 M2011 524 L2005 530 M2011 524 L2022.500 521" stroke="#c8c8c8" stroke-width="0.600" fill="none"/>
<text x="2000.800" y="538" font-weight="bold" font-size="7.800" fill="#000" textLength="16.500" lengthAdjust="spacingAndGlyphs">HPR</text>
</g>
<!-- M3C2 -->
<g>
<text x="1993.500" y="571.800" font-weight="bold" font-size="11" fill="#9ab6e2" textLength="33" lengthAdjust="spacingAndGlyphs">M3C2</text>
<rect x="1993" y="580" width="33" height="10" rx="3" fill="#f0e86a" stroke="#d8d050" stroke-width="0.600" transform="rotate(-17 2010 585)"/>
<path d="M2002 587.500 L2018 582.500" stroke="#a8c8a0" stroke-width="1.200"/><circle cx="2001.700" cy="587.500" r="1.100" fill="#f04a4a"/>
<g fill="#5a5a5a"><circle cx="1998.500" cy="577.500" r="1.100"/><circle cx="1995.200" cy="583" r="1.100"/><circle cx="2001.200" cy="582.500" r="1.100"/><circle cx="2018" cy="575.500" r="1.100"/><circle cx="2021" cy="581.500" r="1.100"/><circle cx="2025.500" cy="585" r="1.100"/><circle cx="2024" cy="590" r="1.100"/><circle cx="2025.500" cy="595.500" r="1.100"/><circle cx="2005.500" cy="591" r="1.100"/><circle cx="2001" cy="598" r="1.100"/><circle cx="2020.500" cy="588" r="1.100"/><circle cx="2016" cy="579" r="1.100"/></g>
</g>
<!-- PCV -->
<g>
<rect x="2000.200" y="620" width="23.800" height="24" fill="#4a4a4a"/>
<path d="M2001 621 Q2006 630 2010 624 Q2014 632 2018 623 Q2021 628 2024 622 V634 H2000.500 Z" fill="#9a9a9a"/><path d="M2004 622 Q2008 628 2011 633 M2014 622 Q2016 628 2019 632" stroke="#d4d4d4" stroke-width="1" fill="none"/>
<rect x="2000.200" y="634.500" width="23.800" height="9.500" fill="#3a3a3a"/>
<text x="2001" y="643" font-family="Liberation Mono, monospace" font-weight="bold" font-size="9.500" fill="#fff" textLength="22" lengthAdjust="spacingAndGlyphs">PCV</text>
</g>
<!-- dodecahedron -->
<g>
<rect x="2000" y="672.800" width="23.200" height="23.200" fill="#fafafa"/>
<path d="M2000.800 684 L2005 676 L2011.500 673.500 L2019 675.500 L2022.500 682 L2021.500 690 L2016 695 L2008 695.500 L2002.500 691.500 Z" fill="#4a9a3c"/>
<path d="M2011.500 673.500 L2019 675.500 L2022.500 682 L2018 682.500 L2010.500 678 Z" fill="#8a7a3a"/>
<path d="M2022.500 682 L2021.500 690 L2016 695 L2015.500 690.500 L2018 682.500 Z" fill="#a86a3a"/>
<path d="M2000.800 684 L2005 676 L2011.500 673.500 L2010.500 678 L2004.500 683.500 Z" fill="#3a9a5a"/>
<path d="M2010.500 678 L2018 682.500 L2015.500 690.500 L2007 691 L2004.500 683.500 Z" fill="#5a9e38" stroke="#3c7a2c" stroke-width="0.500"/>
</g>
</svg>


<!-- DB TREE DOCK -->
<div class="abs" style="left:41px;top:78px;width:322px;height:455px;background:#ececec;"></div>
<div class="docktitle" style="left:41px;top:78px;width:322px;height:25px;line-height:24px;"></div>
<div class="dockbtn" style="left:44px;top:82px;"><svg width="16" height="16" viewBox="0 0 16 16"><rect x="6.2" y="5" width="5.6" height="4.2" rx="1" fill="none" stroke="#fff" stroke-width="1.2"/><rect x="4.2" y="7" width="5.6" height="4.2" rx="1" fill="#3f3f3f" stroke="#fff" stroke-width="1.2"/></svg></div>
<div class="box" id="treebox" style="left:55px;top:117px;width:294px;height:402px;">
  <div class="abs" style="left:0;top:26px;width:292px;height:25px;background:#dcdcdc;"></div>
  <div class="abs" style="left:0;top:26px;width:46px;height:25px;background:#2a5fda;"></div>
  <div class="abs" style="left:11px;top:26px;width:1px;height:25px;background:#1d3f96;"></div>
  <svg class="abs" style="left:0;top:0" width="292" height="80" viewBox="0 0 292 80">
    <path d="M5.5 9 L19.5 9 L12.5 18.5 Z" fill="#6b4a48"/>
    <path d="M30 32 L30 44.6 L38.6 38.3 Z" fill="#201a3c"/>
    <path d="M7.5 56 L7.5 70.5 L17 63.2 Z" fill="#6b4a48"/>
  </svg>
  <div class="cb on" style="left:31px;top:5px;"></div>
  <div class="cb on" style="left:54px;top:30px;"></div>
  <div class="cb off" style="left:31px;top:56px;"></div>
  <svg class="abs" style="left:0;top:0" width="292" height="80" viewBox="0 0 292 80">
    <path d="M34.6 13.2 L37.8 16.6 L43.4 9.2" fill="none" stroke="#fff" stroke-width="2" stroke-linecap="round" stroke-linejoin="round"/>
    <path d="M57.6 38.2 L60.8 41.6 L66.4 34.2" fill="none" stroke="#fff" stroke-width="2" stroke-linecap="round" stroke-linejoin="round"/>
    <g id="folder1">
      <path d="M62.5 7 L68 5.5 L70 7.5 L77.5 9 L78 19 L64 16.5 Z" fill="#c8962e"/>
      <path d="M63 9.5 L79 12 L78.2 21.5 L64.2 18.5 Z" fill="#e9b648"/>
      <path d="M63 9.5 L79 12 L78.8 14 L63.2 11.5 Z" fill="#f3cd6c"/>
    </g>
    <use href="#folder1" y="51"/>
    <g>
      <path d="M86 41.5 Q84.5 38 88 36.5 Q89 33 93 33.8 Q96.5 31.5 99.5 34.5 Q103.5 34.5 103.5 38.5 Q104.5 42.5 100 43.5 Q94 45.5 88.5 44 Q86 43.5 86 41.5 Z" fill="#dfe8f0" stroke="#7c8894" stroke-width="0.9"/>
      <path d="M88.5 38.5 Q91 35.5 94.5 36.5 Q97 35 99.5 37" stroke="#fafcfe" stroke-width="1.6" fill="none"/>
      <path d="M87.5 42 Q94 44.8 101.5 42" stroke="#9fb6cc" stroke-width="1.6" fill="none"/>
    </g>
  </svg>
</div>

<!-- PROPERTIES DOCK -->
<div class="abs" style="left:41px;top:532px;width:322px;height:457px;background:#ececec;border-top:1px solid #c9c9c9;"></div>
<div class="docktitle" style="left:41px;top:533px;width:322px;height:26px;line-height:25px;"></div>
<div class="dockbtn" style="left:44px;top:538px;"><svg width="16" height="16" viewBox="0 0 16 16"><rect x="6.2" y="5" width="5.6" height="4.2" rx="1" fill="none" stroke="#fff" stroke-width="1.2"/><rect x="4.2" y="7" width="5.6" height="4.2" rx="1" fill="#3f3f3f" stroke="#fff" stroke-width="1.2"/></svg></div>
<div class="box" id="propbox" style="left:55px;top:573px;width:294px;height:402px;">
</div>

<div class="abs" style="left:56px;top:574px;width:292px;height:400px;overflow:hidden;">
<div class="row" style="top:0;height:19.6px;background:#f0f0f0;border-bottom:1px solid #dedede;"></div>
<div class="abs" style="left:131px;top:2.3px;width:1px;height:14.5px;background:#c6c6c6;"></div>
<div class="row band" style="top:19.6px;height:20.4px;"></div>
<div class="row g" style="top:40px;height:20.7px;"></div>
<div class="row"   style="top:60.7px;height:23.7px;"></div>
<div class="row g" style="top:84.4px;height:22.5px;"></div>
<div class="row"   style="top:106.9px;height:36.6px;"></div>
<div class="row g" style="top:143.5px;height:57.5px;"></div>
<div class="row"   style="top:201px;height:57.6px;"></div>
<div class="row g" style="top:258.6px;height:57.3px;"></div>
<div class="row"   style="top:315.9px;height:21.1px;"></div>
<div class="row g" style="top:337px;height:37px;"></div>
<div class="row band" style="top:374px;height:19.7px;"></div>
<div class="row g" style="top:393.7px;height:10px;"></div>
<div class="cb on" style="left:140.5px;top:64.7px;"></div>
<svg class="abs" style="left:140.5px;top:64.7px" width="16" height="16" viewBox="0 0 16 16"><path d="M3.8 8.3 L6.9 11.6 L12.4 4.3" fill="none" stroke="#fff" stroke-width="2" stroke-linecap="round" stroke-linejoin="round"/></svg>
<div class="cb off" style="left:140.5px;top:87.6px;"></div>
<div class="abs" style="left:138.5px;top:112.3px;width:170px;height:23.6px;border-radius:6px;background:#fff;box-shadow:0 0 0 0.5px #d4d4d4,0 1px 1.5px rgba(0,0,0,.28);"></div>
<svg class="abs" style="left:149.4px;top:113.6px" width="19.2" height="19.2" viewBox="0 0 22 22"><circle cx="6.6" cy="7" r="5.8" fill="#f02418"/><circle cx="15" cy="7" r="5.8" fill="#55e63a"/><circle cx="10.8" cy="14.6" r="5.8" fill="#1414f0"/><circle cx="10.8" cy="9.3" r="2.3" fill="#f6f2ff"/><circle cx="8.2" cy="11.6" r="1.9" fill="#e83cf0"/><circle cx="13.4" cy="11.6" r="1.9" fill="#3cd6f0"/><circle cx="10.8" cy="6.2" r="1.7" fill="#f0e23c"/></svg>
<div class="abs" style="left:138.5px;top:342.3px;width:170px;height:22.7px;border-radius:6px;background:#fff;box-shadow:0 0 0 0.5px #d4d4d4,0 1px 1.5px rgba(0,0,0,.28);"></div>
</div>

<!-- 3D VIEW -->
<div class="abs" style="left:363px;top:78px;width:2px;height:911px;background:#bdbdbd;"></div>
<div class="abs" style="left:365px;top:79px;width:1608px;height:910px;background:#d9d9d9;border-radius:6px 6px 0 0;overflow:hidden;">
  <div class="abs" style="left:0;top:0;width:1608px;height:31px;background:linear-gradient(#ebebeb,#d9d9d9);border-bottom:1px solid #c8c8c8"></div>
  <div class="tl" style="left:9px;top:8px;background:#ec5f57;"></div>
  <div class="tl" style="left:34.5px;top:8px;background:#f5bd40;"></div>
  <div class="tl" style="left:60px;top:8px;background:#61c554;"></div>
  <div class="abs" id="gl" style="left:0;top:31px;width:1608px;height:878px;background:linear-gradient(#2b6698,#000);overflow:hidden;">
  <svg class="abs" style="left:0;top:0" width="1608" height="878" viewBox="365 110 1608 878">
<defs>
<radialGradient id="rg"><stop offset="0" stop-color="#fff" stop-opacity="1"/><stop offset="0.55" stop-color="#fff" stop-opacity="0.86"/><stop offset="0.85" stop-color="#fff" stop-opacity="0.45"/><stop offset="1" stop-color="#fff" stop-opacity="0"/></radialGradient>
<filter id="fDK" x="365" y="110" width="1608" height="878" filterUnits="userSpaceOnUse" color-interpolation-filters="sRGB"><feTurbulence type="fractalNoise" baseFrequency="0.85" numOctaves="1" seed="3" result="n"/><feColorMatrix in="n" type="matrix" values="0 0 0 0 0  0 0 0 0 0  0 0 0 0 0  2.2 0 0 0 -0.594" result="na"/><feTurbulence type="fractalNoise" baseFrequency="0.032" numOctaves="3" seed="43" result="l"/><feColorMatrix in="l" type="matrix" values="0 0 0 0 0  0 0 0 0 0  0 0 0 0 0  5.5 0 0 0 -2.05" result="la"/><feComposite in="SourceAlpha" in2="la" operator="in" result="dm"/><feComposite in="dm" in2="na" operator="arithmetic" k1="0" k2="1" k3="-1" k4="0" result="m"/><feComponentTransfer in="m" result="m2"><feFuncA type="linear" slope="400" intercept="0"/></feComponentTransfer><feColorMatrix in="n" type="matrix" values="0 0.3 0 0 -0.05  0 0.35 0 0 -0.03  0 0.25 0 0 -0.05  0 0 0 0 1" result="c"/><feComposite in="c" in2="m2" operator="in"/></filter>
<filter id="fOL" x="365" y="110" width="1608" height="878" filterUnits="userSpaceOnUse" color-interpolation-filters="sRGB"><feTurbulence type="fractalNoise" baseFrequency="0.85" numOctaves="1" seed="9" result="n"/><feColorMatrix in="n" type="matrix" values="0 0 0 0 0  0 0 0 0 0  0 0 0 0 0  2.2 0 0 0 -0.594" result="na"/><feTurbulence type="fractalNoise" baseFrequency="0.032" numOctaves="3" seed="49" result="l"/><feColorMatrix in="l" type="matrix" values="0 0 0 0 0  0 0 0 0 0  0 0 0 0 0  5.5 0 0 0 -2.05" result="la"/><feComposite in="SourceAlpha" in2="la" operator="in" result="dm"/><feComposite in="dm" in2="na" operator="arithmetic" k1="0" k2="1" k3="-1" k4="0" result="m"/><feComponentTransfer in="m" result="m2"><feFuncA type="linear" slope="400" intercept="0"/></feComponentTransfer><feColorMatrix in="n" type="matrix" values="0 0.6 0 0 0.0  0 0.6 0 0 0.07  0 0.3 0 0 0.0  0 0 0 0 1" result="c"/><feComposite in="c" in2="m2" operator="in"/></filter>
<filter id="fYG" x="365" y="110" width="1608" height="878" filterUnits="userSpaceOnUse" color-interpolation-filters="sRGB"><feTurbulence type="fractalNoise" baseFrequency="0.85" numOctaves="1" seed="17" result="n"/><feColorMatrix in="n" type="matrix" values="0 0 0 0 0  0 0 0 0 0  0 0 0 0 0  2.2 0 0 0 -0.594" result="na"/><feTurbulence type="fractalNoise" baseFrequency="0.032" numOctaves="3" seed="57" result="l"/><feColorMatrix in="l" type="matrix" values="0 0 0 0 0  0 0 0 0 0  0 0 0 0 0  5.5 0 0 0 -2.05" result="la"/><feComposite in="SourceAlpha" in2="la" operator="in" result="dm"/><feComposite in="dm" in2="na" operator="arithmetic" k1="0" k2="1" k3="-1" k4="0" result="m"/><feComponentTransfer in="m" result="m2"><feFuncA type="linear" slope="400" intercept="0"/></feComponentTransfer><feColorMatrix in="n" type="matrix" values="0 0.9 0 0 0.0  0 0.9 0 0 0.10  0 0.4 0 0 0.02  0 0 0 0 1" result="c"/><feComposite in="c" in2="m2" operator="in"/></filter>
<filter id="fWH" x="365" y="110" width="1608" height="878" filterUnits="userSpaceOnUse" color-interpolation-filters="sRGB"><feTurbulence type="fractalNoise" baseFrequency="0.85" numOctaves="1" seed="23" result="n"/><feColorMatrix in="n" type="matrix" values="0 0 0 0 0  0 0 0 0 0  0 0 0 0 0  2.2 0 0 0 -0.594" result="na"/><feTurbulence type="fractalNoise" baseFrequency="0.03" numOctaves="3" seed="63" result="l"/><feColorMatrix in="l" type="matrix" values="0 0 0 0 0  0 0 0 0 0  0 0 0 0 0  5.5 0 0 0 -2.05" result="la"/><feComposite in="SourceAlpha" in2="la" operator="in" result="dm"/><feComposite in="dm" in2="na" operator="arithmetic" k1="0" k2="1" k3="-1" k4="0" result="m"/><feComponentTransfer in="m" result="m2"><feFuncA type="linear" slope="400" intercept="0"/></feComponentTransfer><feColorMatrix in="n" type="matrix" values="0 0.5 0 0 0.43  0 0.5 0 0 0.46  0 0.3 0.25 0 0.46  0 0 0 0 1" result="c"/><feComposite in="c" in2="m2" operator="in"/></filter>
</defs>
<path d="M834.5 890.1L864.2 889.1M832.3 886.0L1304.8 869.6M826.0 882.0L1347.7 863.9M819.7 878.0L1345.5 859.7M817.5 873.8L1347.4 855.4M811.2 869.8L1345.2 851.3M1426.2 848.5L1562.5 843.8M809.0 865.6L1568.5 839.3M802.7 861.6L1570.4 835.0M804.6 857.3L1572.3 830.7M802.4 853.1L1578.3 826.3M804.3 848.8L1580.2 822.0M806.2 844.5L1582.1 817.7M808.1 840.2L1588.1 813.2M810.0 835.9L1590.0 808.9M811.9 831.6L1596.0 804.5M813.8 827.3L1597.9 800.2M811.6 823.2L1599.8 795.9M813.5 818.9L1605.8 791.4M815.4 814.6L1607.7 787.1M817.3 810.3L1609.6 782.8M819.2 806.0L1615.6 778.4M821.1 801.7L1617.5 774.1M823.0 797.4L1619.4 769.8M820.8 793.2L1625.4 765.4M822.7 788.9L1627.3 761.1M824.6 784.6L1633.3 756.6M826.5 780.3L1635.2 752.3M828.4 776.0L1637.1 748.0M830.3 771.7L1643.1 743.6M832.2 767.4L1645.0 739.3M830.0 763.3L1646.9 735.0M831.9 759.0L1652.9 730.5M833.8 754.7L1654.8 726.2M835.7 750.4L1656.7 721.9M837.6 746.1L1662.7 717.5M839.5 741.8L1664.6 713.2M841.4 737.5L1670.6 708.8M839.2 733.3L1672.5 704.5M841.1 729.0L1674.4 700.2M843.0 724.7L1680.4 695.7M844.9 720.4L1682.3 691.4M846.8 716.1L1684.2 687.1M848.7 711.8L1690.2 682.7M850.6 707.5L1692.1 678.4M848.4 703.4L1694.0 674.1M850.3 699.1L1700.0 669.6M852.2 694.8L1701.9 665.3M854.1 690.5L1707.9 660.9M856.0 686.2L1709.8 656.6M857.9 681.9L1711.7 652.3M859.8 677.6L1717.7 647.8M857.6 673.4L1719.6 643.5M859.5 669.1L1721.5 639.2M861.4 664.8L1727.5 634.8M863.3 660.5L1729.4 630.5M865.2 656.2L1731.3 626.2M867.1 651.9L1737.3 621.8M869.0 647.6L1739.2 617.5M866.8 643.4L1741.1 613.2M868.7 639.1L1747.1 608.7M870.6 634.8L1749.0 604.4M872.5 630.5L1750.9 600.1M874.4 626.2L1756.9 595.7M876.3 621.9L1758.8 591.4M878.2 617.6L1760.7 587.1M876.0 613.5L1766.7 582.6M877.9 609.2L1768.6 578.3M879.8 604.9L1774.6 573.9M881.7 600.6L1776.5 569.6M883.6 596.3L1778.4 565.3M885.5 592.0L1784.4 560.8M887.4 587.7L1786.3 556.5M889.3 583.4L1788.2 552.2M891.2 579.1L1794.2 547.8M893.1 574.8L1796.1 543.5M895.0 570.5L1798.0 539.2M896.9 566.2L1799.9 534.9M898.8 561.9L1805.9 530.5M900.7 557.6L1807.8 526.2M902.6 553.3L1809.7 521.9M904.5 549.0L1811.6 517.6M906.4 544.7L1817.6 513.1M908.3 540.4L1819.5 508.8M906.1 536.2L1821.4 504.5M908.0 531.9L1827.4 500.1M909.9 527.6L1829.3 495.8M911.8 523.3L1831.2 491.5M913.7 519.0L1833.1 487.2M911.5 514.9L1839.1 482.7M913.4 510.6L1841.0 478.4M915.3 506.3L1842.9 474.1M917.2 502.0L1844.8 469.8M919.1 497.7L1850.8 465.4M916.9 493.5L1852.7 461.1M918.8 489.2L1854.6 456.8M920.7 484.9L1856.5 452.5M922.6 480.6L1862.5 448.1M924.5 476.3L1864.4 443.8M922.3 472.1L1866.3 439.5M924.2 467.8L1868.2 435.2M926.1 463.5L1870.1 430.9M928.0 459.2L1872.0 426.6M929.9 454.9L1878.0 422.1M927.7 450.8L1879.9 417.8M929.6 446.5L1881.8 413.5M931.5 442.2L1883.7 409.2M933.4 437.9L1885.6 404.9M935.3 433.6L1887.5 400.6M933.1 429.4L1889.4 396.3M935.0 425.1L1895.4 391.9M936.9 420.8L1897.3 387.6M938.8 416.5L1899.2 383.3M940.7 412.2L1901.1 379.0M938.5 408.1L1903.0 374.7M940.4 403.8L1904.9 370.4M942.3 399.5L1906.8 366.1M944.2 395.2L1908.7 361.8M946.1 390.9L1914.7 357.3M952.1 386.4L1916.6 353.0M954.0 382.1L1918.5 348.7M955.9 377.8L1920.4 344.4M957.8 373.5L1922.3 340.1M959.7 369.2L1924.2 335.8M961.6 364.9L1926.1 331.5M967.6 360.5L1932.1 327.1M969.5 356.2L1934.0 322.8M971.4 351.9L1935.9 318.5M973.3 347.6L1937.8 314.2M975.2 343.3L1939.7 309.9M977.1 339.0L1941.6 305.6M983.1 334.5L1943.5 301.3M985.0 330.2L1945.4 297.0M986.9 325.9L1951.4 292.5M988.8 321.6L1953.3 288.2M990.7 317.3L1955.2 283.9M992.6 313.0L1957.1 279.6M998.6 308.6L1959.0 275.3M1000.5 304.3L1960.9 271.0M1002.4 300.0L1962.8 266.7M1004.3 295.7L1964.7 262.4M1006.2 291.4L1966.6 258.1M1008.1 287.1L1972.6 253.7M1010.0 282.8L1970.4 249.5M1011.9 278.5L1972.3 245.2M1013.8 274.2L1970.1 241.1M1015.7 269.9L1972.0 236.8M1021.7 265.5L1973.9 232.5M1023.6 261.2L1971.7 228.3M1025.5 256.9L1973.6 224.0M1027.4 252.6L1971.4 219.9M1029.3 248.3L1973.3 215.6M1031.2 244.0L1971.1 211.4M1033.1 239.7L1973.0 207.1M1035.0 235.4L1970.8 203.0M1069.7 229.9L1972.7 198.7M1227.4 220.2L1970.5 194.5M1381.0 210.7L1972.4 190.2M1522.3 201.6L1970.2 186.0M1651.3 192.8L1972.1 181.7M1780.3 184.1L1974.0 177.4" stroke="#909e62" stroke-opacity="0.85" stroke-width="1" stroke-dasharray="1 3.102" fill="none" shape-rendering="crispEdges"/>
<path d="M1609.7 848.2L1639.4 847.1M1566.5 845.4L1645.4 842.7M1568.4 841.1L1647.3 838.4M1570.3 836.8L1649.2 834.1M1576.3 832.4L1651.1 829.8M1578.2 828.1L1653.0 825.5M1584.2 823.7L1659.0 821.1M1586.1 819.4L1660.9 816.8M1588.0 815.1L1662.8 812.5M1594.0 810.6L1664.7 808.2M1595.9 806.3L1666.6 803.9M1597.8 802.0L1672.6 799.4M1603.8 797.6L1674.5 795.1M1605.7 793.3L1676.4 790.8M1607.6 789.0L1678.3 786.5M1613.6 784.5L1680.2 782.2M1615.5 780.2L1686.2 777.8M1621.5 775.8L1688.1 773.5M1623.4 771.5L1690.0 769.2M1625.3 767.2L1691.9 764.9M1631.3 762.7L1693.8 760.6M1633.2 758.4L1699.8 756.1M1635.1 754.1L1701.7 751.8M1641.1 749.7L1703.6 747.5M1643.0 745.4L1705.5 743.2M1644.9 741.1L1707.4 738.9M1650.9 736.7L1713.4 734.5M1652.8 732.4L1715.3 730.2M1658.8 727.9L1717.2 725.9M1660.7 723.6L1719.1 721.6M1662.6 719.3L1725.1 717.2M1668.6 714.9L1727.0 712.9M1670.5 710.6L1728.9 708.6M1672.4 706.3L1730.8 704.3M1678.4 701.8L1732.7 700.0M1680.3 697.5L1738.7 695.5M1682.2 693.2L1740.6 691.2M1688.2 688.8L1742.5 686.9M1690.1 684.5L1744.4 682.6M1696.1 680.1L1746.3 678.3M1698.0 675.8L1752.3 673.9M1699.9 671.5L1754.2 669.6M1705.9 667.0L1756.1 665.3M1707.8 662.7L1758.0 661.0M1709.7 658.4L1759.9 656.7M1715.7 654.0L1765.9 652.2M1717.6 649.7L1767.8 647.9M1719.5 645.4L1769.7 643.6M1725.5 640.9L1771.6 639.3M1727.4 636.6L1773.5 635.0M1729.3 632.3L1779.5 630.6M1735.3 627.9L1781.4 626.3M1737.2 623.6L1783.3 622.0M1739.1 619.3L1785.2 617.7M1745.1 614.8L1787.1 613.4M1747.0 610.5L1793.1 608.9M1748.9 606.2L1795.0 604.6M1754.9 601.8L1796.9 600.3M1756.8 597.5L1798.8 596.0M1762.8 593.1L1800.7 591.7M1764.7 588.8L1806.7 587.3M1766.6 584.5L1808.6 583.0M1772.6 580.0L1810.5 578.7M1774.5 575.7L1812.4 574.4M1776.4 571.4L1814.3 570.1M1782.4 567.0L1820.3 565.7M1784.3 562.7L1822.2 561.4M1786.2 558.4L1824.1 557.1M1792.2 553.9L1826.0 552.8M1794.1 549.6L1827.9 548.5M1796.0 545.3L1833.9 544.0M1802.0 540.9L1835.8 539.7M1803.9 536.6L1837.7 535.4M1805.8 532.3L1839.6 531.1M1807.7 528.0L1841.5 526.8M1813.7 523.5L1843.4 522.5M1815.6 519.2L1845.3 518.2M1817.5 514.9L1851.3 513.8M1819.4 510.6L1853.2 509.5M1825.4 506.2L1855.1 505.2M1827.3 501.9L1857.0 500.9M1829.2 497.6L1858.9 496.6M1831.1 493.3L1860.8 492.3M1837.1 488.9L1862.7 488.0M1839.0 484.6L1868.7 483.5M1840.9 480.3L1870.6 479.2M1846.9 475.8L1872.5 474.9M1848.8 471.5L1874.4 470.6M1850.7 467.2L1876.3 466.3M1852.6 462.9L1878.2 462.0M1858.6 458.5L1880.1 457.7M1860.5 454.2L1886.1 453.3M1862.4 449.9L1888.0 449.0M1864.3 445.6L1889.9 444.7M1870.3 441.1L1891.8 440.4M1872.2 436.8L1893.7 436.1M1874.1 432.5L1895.6 431.8M1876.0 428.2L1897.5 427.5M1877.9 423.9L1903.5 423.1M1879.8 419.6L1905.4 418.8M1881.7 415.3L1907.3 414.5M1883.6 411.0L1909.2 410.2M1889.6 406.6L1911.1 405.9M1891.5 402.3L1913.0 401.6M1893.4 398.0L1914.9 397.3M1895.3 393.7L1916.8 393.0M1897.2 389.4L1922.8 388.5M1899.1 385.1L1924.7 384.2M1901.0 380.8L1926.6 379.9M1907.0 376.4L1928.5 375.6M1908.9 372.1L1930.4 371.3M1910.8 367.8L1932.3 367.0M1912.7 363.5L1934.2 362.7M1914.6 359.2L1940.2 358.3M1916.5 354.9L1942.1 354.0M1918.4 350.6L1944.0 349.7M1924.4 346.1L1945.9 345.4M1926.3 341.8L1947.8 341.1M1928.2 337.5L1949.7 336.8M1930.1 333.2L1951.6 332.5M1932.0 328.9L1957.6 328.0M1933.9 324.6L1959.5 323.7M1935.8 320.3L1961.4 319.4M1937.7 316.0L1963.3 315.1M1943.7 311.6L1965.2 310.8M1945.6 307.3L1967.1 306.5M1947.5 303.0L1969.0 302.2M1949.4 298.7L1970.9 297.9M1951.3 294.4L1972.8 293.6M1953.2 290.1L1970.6 289.5M1955.1 285.8L1972.5 285.2M1957.0 281.5L1970.3 281.0M1963.0 277.0L1972.2 276.7M1964.9 272.7L1970.0 272.6M1966.8 268.4L1971.9 268.3M1968.7 264.1L1973.8 264.0M1970.6 259.8L1971.6 259.8M1972.5 255.5L1973.5 255.5" stroke="#909e62" stroke-opacity="0.28" stroke-width="1" stroke-dasharray="1 3.102" fill="none" shape-rendering="crispEdges"/>
<path d="M918.4 770.8L1128.5 763.6M793.2 770.9L1130.4 759.3M795.1 766.6L1132.3 755.0M801.1 762.2L1138.3 750.5M803.0 757.9L1140.2 746.2M804.9 753.6L1142.1 741.9M806.8 749.3L1144.0 737.6M808.7 745.0L1145.9 733.3M814.7 740.6L1147.8 729.0M816.6 736.3L1149.7 724.7M818.5 732.0L1155.7 720.3M820.4 727.7L1157.6 716.0M822.3 723.4L1159.5 711.7M824.2 719.1L1161.4 707.4M830.2 714.6L1163.3 703.1M832.1 710.3L1165.2 698.8M834.0 706.0L1167.1 694.5M835.9 701.7L1173.1 690.0M837.8 697.4L1175.0 685.7M839.7 693.1L1176.9 681.4M845.7 688.7L1178.8 677.1M847.6 684.4L1180.7 672.8M849.5 680.1L1182.6 668.5M851.4 675.8L1188.6 664.1M853.3 671.5L1190.5 659.8M855.2 667.2L1192.4 655.5M861.2 662.7L1194.3 651.2M863.1 658.4L1196.2 646.9M865.0 654.1L1198.1 642.6M866.9 649.8L1200.0 638.3M868.8 645.5L1206.0 633.9M870.7 641.2L1207.9 629.6M876.7 636.8L1209.8 625.3M878.6 632.5L1211.7 621.0M880.5 628.2L1213.6 616.7M882.4 623.9L1215.5 612.4M884.3 619.6L1217.4 608.1M886.2 615.3L1223.4 603.6M892.2 610.8L1225.3 599.3M894.1 606.5L1227.2 595.0M896.0 602.2L1229.1 590.7M897.9 597.9L1231.0 586.4M899.8 593.6L1232.9 582.1M901.7 589.3L1234.8 577.8M907.7 584.9L1240.8 573.4M909.6 580.6L1242.7 569.1M911.5 576.3L1244.6 564.8M913.4 572.0L918.5 571.8" stroke="#c6ced8" stroke-opacity="0.95" stroke-width="1" stroke-dasharray="1 3.102" fill="none" shape-rendering="crispEdges"/>
<path d="M794.2 773.7L1131.4 762.0M796.1 769.4L1133.3 757.7M798.0 765.1L1135.2 753.4M799.9 760.8L1137.1 749.1M801.8 756.5L1139.0 744.8M807.8 752.1L1140.9 740.5M809.7 747.8L1146.9 736.1M811.6 743.5L1148.8 731.8M813.5 739.2L1150.7 727.5M815.4 734.9L1152.6 723.2M817.3 730.6L1154.5 718.9M823.3 726.1L1156.4 714.6M825.2 721.8L1158.3 710.3M827.1 717.5L1164.3 705.8M829.0 713.2L1166.2 701.5M830.9 708.9L1168.1 697.2M832.8 704.6L1170.0 692.9M838.8 700.2L1171.9 688.6M840.7 695.9L1173.8 684.3M842.6 691.6L1175.7 680.0M844.5 687.3L1181.7 675.6M846.4 683.0L1183.6 671.3M848.3 678.7L1185.5 667.0M854.3 674.2L1187.4 662.7M856.2 669.9L1189.3 658.4M858.1 665.6L1191.2 654.1M860.0 661.3L1193.1 649.8M861.9 657.0L1199.1 645.4M863.8 652.7L1201.0 641.1M869.8 648.3L1202.9 636.8M871.7 644.0L1204.8 632.5M873.6 639.7L1206.7 628.2M875.5 635.4L1208.6 623.9M877.4 631.1L1210.5 619.6M879.3 626.8L1216.5 615.1M885.3 622.3L1218.4 610.8M887.2 618.0L1220.3 606.5M889.1 613.7L1222.2 602.2M891.0 609.4L1224.1 597.9M892.9 605.1L1226.0 593.6M894.8 600.8L1227.9 589.3M900.8 596.4L1233.9 584.9M902.7 592.1L1235.8 580.6M904.6 587.8L1237.7 576.3M906.5 583.5L1239.6 572.0M908.4 579.2L1241.5 567.7M910.3 574.9L1243.4 563.4" stroke="#c6ced8" stroke-opacity="0.18" stroke-width="1" stroke-dasharray="1 3.102" fill="none" shape-rendering="crispEdges"/>
<path d="M1249.6 560.4L1562.2 549.5M1251.5 556.1L1564.1 545.2M1253.4 551.8L1566.0 540.9M1255.3 547.5L1567.9 536.6M1257.2 543.2L1569.8 532.3M1259.1 538.9L1571.7 528.0M1256.9 534.7L1573.6 523.7M1258.8 530.4L1575.5 519.4M1260.7 526.1L1577.4 515.1M1262.6 521.8L1579.3 510.8M1264.5 517.5L1585.3 506.4M1266.4 513.2L1587.2 502.1M1268.3 508.9L1589.1 497.8M1270.2 504.6L1591.0 493.5M1272.1 500.3L1592.9 489.2M1274.0 496.0L1594.8 484.9M1275.9 491.7L1596.7 480.6M1277.8 487.4L1598.6 476.3M1279.7 483.1L1600.5 472.0M1281.6 478.8L1602.4 467.7M1279.4 474.6L1608.4 463.2M1281.3 470.3L1610.3 458.9M1283.2 466.0L1612.2 454.6M1285.1 461.7L1614.1 450.3M1287.0 457.4L1616.0 446.0M1288.9 453.1L1617.9 441.7M1290.8 448.8L1619.8 437.4M1292.7 444.5L1625.8 433.0M1294.6 440.2L1627.7 428.7M1296.5 435.9L1629.6 424.4M1298.4 431.6L1631.5 420.1M1300.3 427.3L1637.5 415.7M1302.2 423.0L1639.4 411.4M1304.1 418.7L1641.3 407.1M1306.0 414.4L1647.3 402.6M1307.9 410.1L1649.2 398.3M1309.8 405.8L1651.1 394.0M1315.8 401.4L1657.1 389.6M1317.7 397.1L1659.0 385.3M1319.6 392.8L1660.9 381.0M1321.5 388.5L1662.8 376.7M1327.5 384.1L1668.8 372.2M1329.4 379.8L1670.7 367.9M1331.3 375.5L1672.6 363.6M1333.2 371.2L1678.6 359.2M1339.2 366.7L1680.5 354.9M1341.1 362.4L1682.4 350.6M1343.0 358.1L1688.4 346.2M1344.9 353.8L1690.3 341.9M1350.9 349.4L1692.2 337.6M1352.8 345.1L1694.1 333.3M1354.7 340.8L1700.1 328.8M1356.6 336.5L1702.0 324.5M1362.6 332.0L1703.9 320.2M1364.5 327.7L1709.9 315.8M1366.4 323.4L1711.8 311.5M1368.3 319.1L1713.7 307.2M1374.3 314.7L1719.7 302.7M1376.2 310.4L1721.6 298.4M1378.1 306.1L1723.5 294.1M1380.0 301.8L1725.4 289.8M1386.0 297.4L1731.4 285.4M1387.9 293.1L1733.3 281.1M1389.8 288.8L1735.2 276.8M1391.7 284.4L1741.2 272.3M1397.7 280.0L1743.1 268.0M1399.6 275.7L1745.0 263.7M1401.5 271.4L1751.0 259.3M1403.4 267.1L1752.9 255.0M1409.4 262.7L1754.8 250.7M1411.3 258.4L1756.7 246.4M1413.2 254.1L1762.7 242.0M1415.1 249.8L1764.6 237.7M1421.1 245.3L1766.5 233.4M1423.0 241.0L1772.5 228.9M1424.9 236.7L1774.4 224.6M1426.8 232.4L1776.3 220.3M1432.8 228.0L1782.3 215.9M1434.7 223.7L1784.2 211.6M1436.6 219.4L1786.1 207.3M1438.5 215.1L1788.0 203.0M1485.5 209.2L1794.0 198.5M1647.3 199.4L1795.9 194.2" stroke="#c6ced8" stroke-opacity="0.45" stroke-width="1" stroke-dasharray="1 3.102" fill="none" shape-rendering="crispEdges"/>
<path d="M1499.4 716.8L1529.1 715.8M1497.2 712.7L1567.9 710.2M1495.0 708.5L1606.7 704.7M1488.7 704.5L1641.4 699.2M1486.5 700.4L1643.3 694.9M1484.3 696.2L1645.2 690.6M1482.1 692.0L1651.2 686.2M1479.9 687.9L1653.1 681.9M1473.6 683.9L1655.0 677.6M1471.4 679.7L1656.9 673.3M1469.2 675.5L1662.9 668.8M1467.0 671.4L1664.8 664.5M1460.7 667.4L1666.7 660.2M1458.5 663.2L1672.7 655.8M1456.3 659.1L1674.6 651.5M1454.1 654.9L1676.5 647.2M1451.9 650.7L1682.5 642.8M1445.6 646.7L1684.4 638.5M1443.4 642.6L1686.3 634.2M1441.2 638.4L1692.3 629.7M1443.1 634.1L1694.2 625.4M1440.9 629.9L1696.1 621.1M1442.8 625.6L1702.1 616.7M1440.6 621.5L1704.0 612.4M1442.5 617.2L1705.9 608.1M1440.3 613.0L1711.9 603.6M1442.2 608.7L1713.8 599.3M1440.0 604.6L1715.7 595.0M1441.9 600.3L1721.7 590.6M1443.8 596.0L1723.6 586.3M1441.6 591.8L1725.5 582.0M1443.5 587.5L1731.5 577.5M1441.3 583.4L1733.4 573.2M1443.2 579.1L1735.3 568.9M1441.0 574.9L1741.3 564.5M1442.9 570.6L1743.2 560.2M1440.7 566.4L1745.1 555.9M1442.6 562.1L1693.7 553.4" stroke="#c6ced8" stroke-opacity="0.55" stroke-width="1" stroke-dasharray="1 3.102" fill="none" shape-rendering="crispEdges"/>
<path d="M1595.3 551.9L1596.3 551.9M1550.2 550.5L1597.6 548.8M1554.5 547.3L1599.0 545.8M1555.8 544.3L1600.3 542.7M1557.2 541.2L1604.6 539.6M1558.5 538.2L1605.9 536.5M1559.9 535.1L1607.3 533.5M1561.2 532.1L1608.6 530.4M1562.6 529.0L1610.0 527.4M1566.8 525.9L1611.3 524.3M1568.2 522.8L1612.7 521.3M1569.5 519.8L1614.0 518.2M1570.9 516.7L1615.4 515.2M1572.2 513.7L1619.6 512.0M1573.6 510.6L1621.0 509.0M1574.9 507.6L1622.3 505.9M1579.2 504.4L1623.7 502.9M1580.5 501.4L1625.0 499.8M1581.9 498.3L1626.4 496.8M1583.2 495.3L1627.7 493.7M1584.6 492.2L1629.1 490.7M1585.9 489.2L1630.4 487.6M1587.3 486.1L1631.8 484.6M1591.5 483.0L1636.0 481.4M1592.9 479.9L1637.4 478.4M1594.2 476.9L1638.7 475.3M1595.6 473.8L1640.1 472.3M1596.9 470.8L1641.4 469.2M1598.3 467.7L1642.8 466.2M1599.6 464.7L1644.1 463.1M1603.9 461.5L1645.5 460.1M1605.2 458.5L1646.8 457.0M1606.6 455.4L1651.1 453.9M1607.9 452.4L1652.4 450.8M1609.3 449.3L1653.8 447.8M1610.6 446.3L1655.1 444.7M1612.0 443.2L1656.5 441.7M1616.2 440.1L1657.8 438.6M1617.6 437.0L1659.2 435.6M1618.9 434.0L1660.5 432.5M1620.3 430.9L1661.9 429.5M1621.6 427.9L1663.2 426.4M1623.0 424.8L1667.5 423.3M1627.2 421.7L1668.8 420.2M1628.6 418.6L1670.2 417.2M1629.9 415.6L1671.5 414.1M1631.3 412.5L1672.9 411.1M1632.6 409.5L1674.2 408.0M1634.0 406.4L1675.6 405.0M1635.3 403.4L1676.9 401.9M1639.6 400.2L1678.3 398.9M1640.9 397.2L1682.5 395.7M1642.3 394.1L1683.9 392.7M1643.6 391.1L1685.2 389.6M1645.0 388.0L1686.6 386.6M1646.3 385.0L1687.9 383.5M1647.7 381.9L1689.3 380.5M1651.9 378.8L1690.6 377.4M1653.3 375.7L1692.0 374.4M1654.6 372.7L1693.3 371.3M1656.0 369.6L1697.6 368.2M1657.3 366.6L1698.9 365.1M1658.7 363.5L1700.3 362.1M1660.0 360.5L1701.6 359.0M1664.3 357.3L1703.0 356.0M1665.6 354.3L1704.3 352.9M1667.0 351.2L1705.7 349.9M1668.3 348.2L1707.0 346.8M1669.7 345.1L1708.4 343.8M1671.0 342.1L1709.7 340.7M1672.4 339.0L1714.0 337.6M1676.6 335.9L1715.3 334.5M1678.0 332.8L1716.7 331.5M1679.3 329.8L1718.0 328.4M1680.7 326.7L1719.4 325.4M1682.0 323.7L1720.7 322.3M1683.4 320.6L1722.1 319.3M1684.7 317.6L1723.4 316.2M1689.0 314.4L1724.8 313.2M1690.3 311.4L1729.0 310.0M1691.7 308.3L1730.4 307.0M1693.0 305.3L1731.7 303.9M1694.4 302.2L1733.1 300.9M1695.7 299.2L1734.4 297.8M1700.0 296.0L1735.8 294.8M1701.3 293.0L1737.1 291.7M1702.7 289.9L1738.5 288.7M1704.0 286.9L1739.8 285.6M1705.4 283.8L1741.2 282.6M1706.7 280.8L1745.4 279.4M1708.1 277.7L1746.8 276.4M1712.3 274.6L1748.1 273.3M1713.7 271.5L1749.5 270.3M1715.0 268.5L1750.8 267.2M1716.4 265.4L1752.2 264.2M1717.7 262.4L1753.5 261.1M1719.1 259.3L1754.9 258.1M1720.4 256.3L1756.2 255.0M1724.7 253.1L1760.5 251.9M1726.0 250.1L1761.8 248.8M1727.4 247.0L1763.2 245.8M1728.7 244.0L1764.5 242.7M1730.1 240.9L1765.9 239.7M1731.4 237.9L1767.2 236.6M1732.8 234.8L1768.6 233.6M1737.0 231.7L1769.9 230.5M1738.4 228.6L1771.3 227.5M1739.7 225.6L1775.5 224.3M1741.1 222.5L1776.9 221.3M1742.4 219.5L1778.2 218.2M1743.8 216.4L1779.6 215.2M1745.1 213.4L1780.9 212.1M1749.4 210.2L1782.3 209.1M1750.7 207.2L1783.6 206.0M1752.1 204.1L1785.0 203.0M1753.4 201.1L1786.3 199.9M1754.8 198.0L1787.7 196.9M1756.1 195.0L1791.9 193.7M1757.5 191.9L1793.3 190.7M1761.7 188.8L1794.6 187.6M1763.1 185.7L1796.0 184.6" stroke="#ccd4de" stroke-opacity="0.95" stroke-width="1" stroke-dasharray="1 1.902" fill="none" shape-rendering="crispEdges"/>
<path d="M1556.9 619.3L1560.8 619.2M1535.0 617.1L1562.1 616.1M1516.1 614.7L1563.5 613.1M1517.4 611.7L1564.8 610.0M1518.8 608.6L1566.2 607.0M1520.1 605.6L1567.5 603.9M1524.4 602.4L1568.9 600.9M1525.7 599.4L1570.2 597.8M1527.1 596.3L1574.5 594.7M1528.4 593.3L1575.8 591.6M1529.8 590.2L1577.2 588.6M1531.1 587.2L1578.5 585.5M1532.5 584.1L1579.9 582.5M1533.8 581.1L1581.2 579.4M1535.2 578.0L1582.6 576.4M1539.4 574.9L1583.9 573.3M1540.8 571.8L1585.3 570.3M1542.1 568.8L1589.5 567.1M1543.5 565.7L1590.9 564.1M1544.8 562.7L1592.2 561.0M1546.2 559.6L1593.6 558.0M1547.5 556.6L1594.9 554.9M1548.9 553.5L1593.4 552.0" stroke="#ccd4de" stroke-opacity="0.60" stroke-width="1" stroke-dasharray="1 1.902" fill="none" shape-rendering="crispEdges"/>
<path d="M913.1 563.5L971.5 561.5M915.0 559.2L1002.1 556.2M912.8 555.1L1004.0 551.9M914.7 550.8L1005.9 547.6M916.6 546.5L1007.8 543.3M914.4 542.3L1009.7 539.0M916.3 538.0L1011.6 534.7M918.2 533.7L1013.5 530.4M920.1 529.4L1015.4 526.1M917.9 525.3L1017.3 521.8M919.8 521.0L1019.2 517.5M921.7 516.7L1021.1 513.2M919.5 512.5L1023.0 508.9M921.4 508.2L1024.9 504.6M923.3 503.9L1026.8 500.3M925.2 499.6L1032.8 495.9M923.0 495.5L1034.7 491.6M924.9 491.2L1036.6 487.3M926.8 486.9L1038.5 483.0M924.6 482.7L1040.4 478.7M926.5 478.4L1042.3 474.4M928.4 474.1L1044.2 470.1M930.3 469.8L1046.1 465.8M928.1 465.6L1048.0 461.5M930.0 461.3L1049.9 457.2M931.9 457.0L1051.8 452.9M929.7 452.9L1053.7 448.6M931.6 448.6L1055.6 444.3M933.5 444.3L1057.5 440.0M935.4 440.0L1059.4 435.7M933.2 435.8L1061.3 431.4M935.1 431.5L1063.2 427.1M937.0 427.2L1065.1 422.8M934.8 423.1L1067.0 418.5M936.7 418.8L1068.9 414.2M942.7 414.3L1066.7 410.0M944.6 410.0L1068.6 405.7M946.5 405.7L1070.5 401.4M952.5 401.3L1072.4 397.1M954.4 397.0L1074.3 392.8M956.3 392.7L1076.2 388.5M958.2 388.4L1078.1 384.2M964.2 383.9L1075.9 380.1M966.1 379.6L1008.1 378.2M1019.4 377.8L1077.8 375.8M968.0 375.3L1010.0 373.9M1037.7 372.9L1079.7 371.5M974.0 370.9L1011.9 369.6M1056.0 368.1L1081.6 367.2M975.9 366.6L1013.8 365.3M1074.3 363.2L1083.5 362.9M977.8 362.3L1015.7 361.0M979.7 358.0L1017.6 356.7M981.6 353.7L1019.5 352.4M983.5 349.4L1021.4 348.1M985.4 345.1L1023.3 343.8M987.3 340.8L1025.2 339.5M989.2 336.5L1027.1 335.2M991.1 332.2L1029.0 330.9M993.0 327.9L1030.9 326.6M994.9 323.6L1032.8 322.3M996.8 319.3L1034.7 318.0M998.7 315.0L1036.6 313.7M1000.6 310.7L1038.5 309.4M1002.5 306.4L1040.4 305.1M1004.4 302.1L1042.3 300.8M1006.3 297.8L1044.2 296.5M1008.2 293.5L1046.1 292.2M1010.1 289.2L1048.0 287.9M1012.0 284.9L1049.9 283.6M1013.9 280.6L1051.8 279.3M1015.8 276.3L1053.7 275.0M1017.7 272.0L1055.6 270.7M1019.6 267.7L1057.5 266.4M1021.5 263.4L1059.4 262.1M1023.4 259.1L1061.3 257.8M1025.3 254.8L1063.2 253.5M1027.2 250.5L1065.1 249.2M1029.1 246.2L1067.0 244.9M1031.0 241.9L1068.9 240.6M1032.9 237.6L1070.8 236.3M1034.8 233.3L1072.7 232.0" stroke="#c6ced8" stroke-opacity="0.70" stroke-width="1" stroke-dasharray="1 3.102" fill="none" shape-rendering="crispEdges"/>
<path d="M881.1 567.6L964.1 564.8M883.0 563.3L1039.8 557.9M884.9 559.0L1041.7 553.6M882.7 554.9L1043.6 549.3M884.6 550.6L1045.5 545.0M886.5 546.3L1043.3 540.9M888.4 542.0L1045.2 536.6M886.2 537.8L1047.1 532.3M888.1 533.5L1049.0 528.0M890.0 529.2L1050.9 523.7M887.8 525.1L1052.8 519.4M889.7 520.8L1054.7 515.1M891.6 516.5L1052.5 510.9M893.5 512.2L1054.4 506.6M891.3 508.0L1056.3 502.3M893.2 503.7L1058.2 498.0M895.1 499.4L1060.1 493.7M892.9 495.2L1062.0 489.4M894.8 490.9L1063.9 485.1M896.7 486.7L1061.7 480.9M898.6 482.3L1063.6 476.6M896.4 478.2L1065.5 472.3M898.3 473.9L1067.4 468.0M900.2 469.6L1069.3 463.7M898.0 465.4L1071.2 459.4M899.9 461.1L1073.1 455.1M901.8 456.8L1075.0 450.8M899.6 452.7L1072.8 446.7M901.5 448.4L1074.7 442.4M903.4 444.1L1076.6 438.1M905.3 439.8L1078.5 433.8M903.1 435.6L1080.4 429.5M905.0 431.3L1082.3 425.2M906.9 427.0L1084.2 420.9M904.7 422.9L1082.0 416.7M927.1 417.8L1083.9 412.4M982.3 411.7L1085.8 408.1M1041.6 405.4L1087.7 403.8" stroke="#c6ced8" stroke-opacity="0.40" stroke-width="1" stroke-dasharray="1 3.102" fill="none" shape-rendering="crispEdges"/>
<path d="M691.6 639.3L762.3 636.9M694.5 635.2L765.2 632.7M693.2 631.2L768.0 628.6M692.0 627.2L770.9 624.4M694.9 623.0L773.8 620.3M693.6 619.0L776.6 616.2M696.5 614.9L779.5 612.0M695.2 610.9L782.3 607.9M698.1 606.7L785.2 603.7M696.9 602.7L788.1 599.6M695.6 598.7L790.9 595.4M698.5 594.6L793.8 591.3M697.2 590.6L796.6 587.2M700.1 586.5L799.5 583.0M698.9 582.5L802.4 578.9M701.7 578.3L805.2 574.7M700.5 574.3L808.1 570.6M703.3 570.2L810.9 566.4M702.1 566.2L813.8 562.3M700.9 562.2L812.6 558.3M703.7 558.0L815.4 554.2M702.5 554.0L814.2 550.2M705.4 549.9L812.9 546.2M704.1 545.9L815.8 542.0M707.0 541.8L814.6 538.0M705.7 537.8L817.4 533.9M708.6 533.6L816.2 529.9M707.3 529.6L814.9 525.9M710.2 525.5L817.8 521.7M709.0 521.5L816.6 517.7M711.8 517.3L819.4 513.6M710.6 513.3L818.2 509.6M713.5 509.2L816.9 505.6M712.2 505.2L819.8 501.5M715.1 501.0L818.6 497.5M713.8 497.0L817.3 493.5M716.7 492.9L820.2 489.3M715.4 488.9L818.9 485.3M718.3 484.8L821.8 481.2M717.1 480.8L820.6 477.2M719.9 476.6L819.3 473.2M718.7 472.6L822.2 469.0M721.5 468.5L820.9 465.0M720.3 464.5L819.7 461.0M723.2 460.3L822.6 456.9M721.9 456.3L821.3 452.9M720.7 452.3L824.2 448.7M723.5 448.2L822.9 444.7M722.3 444.2L821.7 440.7M725.2 440.0L824.6 436.6M723.9 436.0L823.3 432.6M726.8 431.9L822.1 428.6M725.5 427.9L824.9 424.5M728.4 423.8L823.7 420.5M727.2 419.8L826.6 416.3" stroke="#c2cad4" stroke-opacity="0.90" stroke-width="1" stroke-dasharray="1 3.102" fill="none" shape-rendering="crispEdges"/>
<path d="M735.5 417.3L757.0 416.5M749.7 412.5L836.8 409.5M759.8 408.0L838.7 405.2M774.0 403.2L844.7 400.8M784.1 398.6L846.6 396.5" stroke="#c6ced8" stroke-opacity="0.80" stroke-width="1" stroke-dasharray="1 3.102" fill="none" shape-rendering="crispEdges"/>
<path d="M894.5 560.0L903.7 559.6M822.6 558.2L905.6 555.3M820.4 554.1L903.4 551.2M822.3 549.8L905.3 546.9M824.2 545.5L903.1 542.7M822.0 541.3L905.0 538.4M823.9 537.0L902.8 534.3M821.7 532.8L904.7 530.0M823.6 528.5L902.5 525.8M825.5 524.2L904.4 521.5M823.3 520.1L902.2 517.3M825.2 515.8L904.1 513.0M827.1 511.5L901.9 508.9M824.9 507.3L903.8 504.6M826.8 503.0L905.7 500.3M824.6 498.9L903.5 496.1M826.5 494.6L905.4 491.8M828.4 490.3L903.2 487.7M826.2 486.1L905.1 483.4M828.1 481.8L902.9 479.2M825.9 477.6L904.8 474.9M827.8 473.3L902.6 470.8M829.7 469.0L904.5 466.5M827.5 464.9L902.3 462.3M829.4 460.6L904.2 458.0M827.2 456.4L902.0 453.8M829.1 452.1L903.9 449.5M831.0 447.8L905.8 445.2M828.8 443.7L903.6 441.1M830.7 439.4L905.5 436.8M828.5 435.2L903.3 432.6M830.4 430.9L905.2 428.3M832.3 426.6L903.0 424.2M830.1 422.5L904.9 419.9M832.0 418.2L902.7 415.7M829.8 414.0L904.6 411.4M831.7 409.7L902.4 407.3M833.6 405.4L904.3 403.0M831.4 401.2L902.1 398.8" stroke="#c6ced8" stroke-opacity="0.35" stroke-width="1" stroke-dasharray="1 3.102" fill="none" shape-rendering="crispEdges"/>
<path d="M758.7 839.9L817.1 837.9M699.1 837.7L814.9 833.7M684.6 834.0L816.8 829.4M670.1 830.2L818.7 825.1M655.6 826.5L820.6 820.8M641.1 822.8L822.5 816.5M630.7 818.9L824.4 812.2M632.6 814.6L826.3 807.9M630.4 810.5L828.2 803.6M632.3 806.2L830.1 799.3M634.2 801.9L832.0 795.0M636.1 797.6L829.8 790.8M638.0 793.3L831.7 786.5M639.9 789.0L833.6 782.2M641.8 784.7L835.5 777.9M639.6 780.5L837.4 773.6M641.5 776.2L831.1 769.6M643.4 771.9L824.8 765.6M645.3 767.6L822.6 761.5M647.2 763.3L816.3 757.4M649.1 759.0L810.0 753.4M651.0 754.7L807.8 749.3M648.8 750.5L801.5 745.2M650.7 746.2L795.2 741.2M652.6 741.9L793.0 737.1M654.5 737.6L786.7 733.1M656.4 733.3L780.4 729.0M658.3 729.0L770.0 725.2M660.2 724.7L763.7 721.2M662.1 720.4L757.4 717.1M659.9 716.3L751.1 713.1M661.8 712.0L744.8 709.1M667.8 707.5L738.5 705.1M677.9 703.0L728.1 701.2M688.0 698.4L721.8 697.2M694.0 693.9L711.4 693.3" stroke="#c6ced8" stroke-opacity="0.95" stroke-width="1" stroke-dasharray="1 3.102" fill="none" shape-rendering="crispEdges"/>
<path d="M800.7 841.2L814.0 840.8M737.0 839.2L815.9 836.5M693.8 836.5L817.8 832.2M679.3 832.7L819.7 827.9M664.8 829.0L821.6 823.6M650.3 825.3L823.5 819.3M635.8 821.5L821.3 815.1M629.5 817.5L823.2 810.8M631.4 813.2L825.1 806.5M633.3 808.9L827.0 802.2M635.2 804.6L828.9 797.9M637.1 800.3L830.8 793.6M634.9 796.2L832.7 789.3M636.8 791.9L834.6 785.0M638.7 787.6L836.5 780.7M640.6 783.3L838.4 776.4M642.5 779.0L832.1 772.4M644.4 774.7L829.9 768.2M646.3 770.4L823.6 764.2M644.1 766.2L817.3 760.2M646.0 761.9L815.1 756.0M647.9 757.6L808.8 752.0M649.8 753.3L802.5 748.0M651.7 749.0L800.3 743.8M653.6 744.7L794.0 739.8M655.5 740.4L791.8 735.7M653.3 736.2L781.4 731.8M655.2 731.9L775.1 727.8M657.1 727.6L768.8 723.8M659.0 723.3L762.5 719.8M660.9 719.0L756.2 715.7M662.8 714.7L749.9 711.7M664.7 710.4L739.5 707.8M670.7 706.0L733.2 703.8M680.8 701.4L726.9 699.8M690.9 696.8L716.5 695.9M696.9 692.4L706.1 692.1" stroke="#c6ced8" stroke-opacity="0.55" stroke-width="1" stroke-dasharray="1 3.102" fill="none" shape-rendering="crispEdges"/>
<path d="M608.4 812.0L629.9 811.3M549.8 810.0L628.7 807.3M552.6 805.8L631.5 803.1M551.4 801.8L630.3 799.1M550.1 797.8L633.1 795.0M553.0 793.7L631.9 791.0M551.8 789.7L630.7 787.0M554.6 785.6L633.5 782.8M553.4 781.6L632.3 778.8M552.1 777.6L631.0 774.8M555.0 773.4L633.9 770.7M553.8 769.4L632.7 766.7M577.1 764.6L631.4 762.7M604.6 759.6L634.3 758.5M632.0 754.6L633.0 754.5" stroke="#c2cad4" stroke-opacity="0.75" stroke-width="1" stroke-dasharray="1 3.102" fill="none" shape-rendering="crispEdges"/>
<path d="M885.7 890.5L903.1 889.9M805.6 889.1L905.0 885.6M770.6 886.0L902.8 881.5M735.6 883.0L904.7 877.2M700.6 880.0L902.5 873.0M698.4 875.8L904.4 868.7M696.2 871.7L902.2 864.6M694.0 867.5L904.1 860.3M687.7 863.5L873.2 857.1M685.5 859.4L842.3 853.9M683.3 855.2L807.3 850.9M677.0 851.2L710.8 850.0" stroke="#c6ced8" stroke-opacity="0.50" stroke-width="1" stroke-dasharray="1 3.102" fill="none" shape-rendering="crispEdges"/>
<path d="M902.6 884.5L1067.6 878.7M879.9 881.0L1344.2 864.9M857.2 877.6L1346.1 860.6M830.4 874.3L1343.9 856.5M807.7 870.8L1345.8 852.2M801.4 866.8L1347.7 847.9M799.2 862.6L1345.5 843.7M801.1 858.3L1347.4 839.4M798.9 854.2L1345.2 835.3M800.8 849.9L1347.1 831.0M798.6 845.7L1344.9 826.8M800.5 841.4L1346.8 822.5M798.3 837.3L1344.6 818.3M796.1 833.1L1346.5 814.0M798.0 828.8L1344.3 809.9M795.8 824.6L1346.2 805.6M797.7 820.3L1344.0 801.4M795.5 816.2L1325.4 797.8M793.3 812.0L1298.6 794.5M795.2 807.7L1271.8 791.2M793.0 803.6L1240.9 788.1M794.9 799.3L1214.1 784.8M792.7 795.1L1183.2 781.6M790.5 791.0L1156.4 778.3" stroke="#c6ced8" stroke-opacity="0.35" stroke-width="1" stroke-dasharray="1 3.102" fill="none" shape-rendering="crispEdges"/>
<path d="M1541.6 846.4L1563.1 845.6M1350.8 848.8L1560.9 841.5M1348.6 844.6L1558.7 837.3M1350.5 840.3L1556.5 833.2M1348.3 836.1L1554.3 829.0M1350.2 831.8L1552.1 824.9M1348.0 827.7L1549.9 820.7M1349.9 823.4L1547.7 816.5M1347.7 819.2L1545.5 812.4M1349.6 814.9L1543.3 808.2M1347.4 810.8L1541.1 804.1M1349.3 806.5L1538.9 799.9M1347.1 802.3L1536.7 795.8M1340.8 798.3L1534.5 791.6M1318.1 794.9L1532.3 787.4M1295.4 791.4L1530.1 783.3M1276.8 787.8L1527.9 779.1M1254.1 784.4L1525.7 775.0M1235.5 780.8L1523.5 770.8M1212.8 777.3L1521.3 766.6M1190.1 773.9L1519.1 762.5M1171.5 770.3L1516.9 758.3M1148.8 766.8L1514.7 754.2M1134.3 763.1L1512.5 750.0M1136.2 758.8L1510.3 745.9M1138.1 754.5L1508.1 741.7M1140.0 750.2L1505.9 737.5M1141.9 745.9L1503.7 733.4M1143.8 741.6L1501.5 729.2M1145.7 737.3L1503.4 724.9M1151.7 732.9L1501.2 720.8M1153.6 728.6L1494.9 716.7M1155.5 724.3L1492.7 712.6M1157.4 720.0L1490.5 708.4M1159.3 715.7L1488.3 704.3M1161.2 711.4L1486.1 700.1M1163.1 707.1L1479.8 696.1M1169.1 702.6L1477.6 691.9M1171.0 698.3L1475.4 687.8M1172.9 694.0L1473.2 683.6M1174.8 689.7L1466.9 679.6M1176.7 685.4L1464.7 675.5M1178.6 681.1L1462.5 671.3M1180.5 676.8L1460.3 667.1M1186.5 672.4L1458.1 663.0M1188.4 668.1L1451.8 659.0M1190.3 663.8L1449.6 654.8M1192.2 659.5L1447.4 650.6M1194.1 655.2L1445.2 646.5M1196.0 650.9L1438.9 642.5M1197.9 646.6L1440.8 638.2M1203.9 642.1L1438.6 634.0M1205.8 637.8L1440.5 629.7M1207.7 633.5L1438.3 625.6M1209.6 629.2L1440.2 621.3M1211.5 624.9L1438.0 617.1M1213.4 620.6L1439.9 612.8M1215.3 616.3L1437.7 608.6M1221.3 611.9L1439.6 604.3M1223.2 607.6L1437.4 600.2M1225.1 603.3L1439.3 595.9M1227.0 599.0L1437.1 591.7M1228.9 594.7L1439.0 587.4M1230.8 590.4L1440.9 583.1M1232.7 586.1L1438.7 579.0M1238.7 581.7L1440.6 574.7M1240.6 577.4L1438.4 570.5M1242.5 573.1L1440.3 566.2M1244.4 568.8L1438.1 562.1M1246.3 564.5L1321.1 561.9" stroke="#a8b850" stroke-opacity="0.35" stroke-width="1" stroke-dasharray="1 3.102" fill="none" shape-rendering="crispEdges"/>
<g filter="url(#fWH)"><ellipse cx="925" cy="240" rx="85" ry="100" fill="url(#rg)" fill-opacity="0.084"/><ellipse cx="930" cy="168" rx="13" ry="36" fill="url(#rg)" fill-opacity="0.325"/><ellipse cx="890" cy="355" rx="58" ry="62" fill="url(#rg)" fill-opacity="0.074"/><ellipse cx="940" cy="480" rx="48" ry="68" fill="url(#rg)" fill-opacity="0.039"/><ellipse cx="1185" cy="150" rx="90" ry="52" fill="url(#rg)" fill-opacity="0.056"/><ellipse cx="1130" cy="240" rx="58" ry="62" fill="url(#rg)" fill-opacity="0.055"/><ellipse cx="1220" cy="300" rx="105" ry="105" fill="url(#rg)" fill-opacity="0.099"/><ellipse cx="1320" cy="260" rx="95" ry="85" fill="url(#rg)" fill-opacity="0.082"/><ellipse cx="1400" cy="200" rx="64" ry="72" fill="url(#rg)" fill-opacity="0.045"/><ellipse cx="1350" cy="370" rx="95" ry="62" fill="url(#rg)" fill-opacity="0.046"/><ellipse cx="1170" cy="400" rx="72" ry="46" fill="url(#rg)" fill-opacity="0.067"/><ellipse cx="1400" cy="440" rx="46" ry="56" fill="url(#rg)" fill-opacity="0.053"/><ellipse cx="1290" cy="150" rx="52" ry="36" fill="url(#rg)" fill-opacity="0.039"/><ellipse cx="610" cy="707" rx="23" ry="40" fill="url(#rg)" fill-opacity="0.095"/><ellipse cx="517" cy="786" rx="23" ry="25" fill="url(#rg)" fill-opacity="0.066"/><ellipse cx="826" cy="588" rx="40" ry="40" fill="url(#rg)" fill-opacity="0.095"/><ellipse cx="845" cy="659" rx="23" ry="25" fill="url(#rg)" fill-opacity="0.095"/><ellipse cx="818" cy="704" rx="23" ry="21" fill="url(#rg)" fill-opacity="0.089"/><ellipse cx="759" cy="790" rx="44" ry="44" fill="url(#rg)" fill-opacity="0.053"/><ellipse cx="1235" cy="719" rx="74" ry="52" fill="url(#rg)" fill-opacity="0.072"/><ellipse cx="1325" cy="677" rx="32" ry="25" fill="url(#rg)" fill-opacity="0.072"/><ellipse cx="1422" cy="689" rx="37" ry="33" fill="url(#rg)" fill-opacity="0.072"/><ellipse cx="1480" cy="650" rx="47" ry="47" fill="url(#rg)" fill-opacity="0.053"/><ellipse cx="1330" cy="720" rx="160" ry="115" fill="url(#rg)" fill-opacity="0.030"/><ellipse cx="1260" cy="640" rx="60" ry="40" fill="url(#rg)" fill-opacity="0.033"/><ellipse cx="1560" cy="780" rx="68" ry="46" fill="url(#rg)" fill-opacity="0.018"/><ellipse cx="1300" cy="820" rx="58" ry="23" fill="url(#rg)" fill-opacity="0.033"/><ellipse cx="1586" cy="150" rx="42" ry="40" fill="url(#rg)" fill-opacity="0.027"/><ellipse cx="1601" cy="190" rx="7" ry="62" fill="url(#rg)" fill-opacity="0.265"/><ellipse cx="1690" cy="290" rx="23" ry="60" fill="url(#rg)" fill-opacity="0.066"/><ellipse cx="1650" cy="330" rx="30" ry="34" fill="url(#rg)" fill-opacity="0.033"/><ellipse cx="1715" cy="410" rx="9" ry="72" fill="url(#rg)" fill-opacity="0.210"/><ellipse cx="1855" cy="160" rx="30" ry="17" fill="url(#rg)" fill-opacity="0.039"/><ellipse cx="1900" cy="200" rx="19" ry="58" fill="url(#rg)" fill-opacity="0.027"/><ellipse cx="1000" cy="530" rx="34" ry="28" fill="url(#rg)" fill-opacity="0.053"/><ellipse cx="1130" cy="480" rx="40" ry="34" fill="url(#rg)" fill-opacity="0.033"/><ellipse cx="1110" cy="545" rx="44" ry="21" fill="url(#rg)" fill-opacity="0.039"/><ellipse cx="590" cy="860" rx="60" ry="16" fill="url(#rg)" fill-opacity="0.288" transform="rotate(-58 590 860)"/><ellipse cx="685" cy="872" rx="20" ry="42" fill="url(#rg)" fill-opacity="0.456" transform="rotate(12 685 872)"/><ellipse cx="700" cy="790" rx="16" ry="60" fill="url(#rg)" fill-opacity="0.325" transform="rotate(25 700 790)"/><ellipse cx="740" cy="805" rx="75" ry="55" fill="url(#rg)" fill-opacity="0.230" transform="rotate(30 740 805)"/><ellipse cx="790" cy="880" rx="110" ry="12" fill="url(#rg)" fill-opacity="0.325" transform="rotate(-2 790 880)"/><ellipse cx="1000" cy="876" rx="120" ry="9" fill="url(#rg)" fill-opacity="0.288" transform="rotate(-2 1000 876)"/></g>
<g filter="url(#fYG)"><ellipse cx="925" cy="240" rx="85" ry="100" fill="url(#rg)" fill-opacity="0.306"/><ellipse cx="930" cy="168" rx="13" ry="36" fill="url(#rg)" fill-opacity="0.249"/><ellipse cx="890" cy="355" rx="58" ry="62" fill="url(#rg)" fill-opacity="0.126"/><ellipse cx="940" cy="480" rx="48" ry="68" fill="url(#rg)" fill-opacity="0.072"/><ellipse cx="1185" cy="150" rx="90" ry="52" fill="url(#rg)" fill-opacity="0.232"/><ellipse cx="1130" cy="240" rx="58" ry="62" fill="url(#rg)" fill-opacity="0.225"/><ellipse cx="1220" cy="300" rx="105" ry="105" fill="url(#rg)" fill-opacity="0.172"/><ellipse cx="1320" cy="260" rx="95" ry="85" fill="url(#rg)" fill-opacity="0.142"/><ellipse cx="1400" cy="200" rx="64" ry="72" fill="url(#rg)" fill-opacity="0.200"/><ellipse cx="1350" cy="370" rx="95" ry="62" fill="url(#rg)" fill-opacity="0.345"/><ellipse cx="1170" cy="400" rx="72" ry="46" fill="url(#rg)" fill-opacity="0.115"/><ellipse cx="1400" cy="440" rx="46" ry="56" fill="url(#rg)" fill-opacity="0.224"/><ellipse cx="1290" cy="150" rx="52" ry="36" fill="url(#rg)" fill-opacity="0.187"/><ellipse cx="610" cy="707" rx="23" ry="40" fill="url(#rg)" fill-opacity="0.333"/><ellipse cx="517" cy="786" rx="23" ry="25" fill="url(#rg)" fill-opacity="0.257"/><ellipse cx="826" cy="588" rx="40" ry="40" fill="url(#rg)" fill-opacity="0.333"/><ellipse cx="845" cy="659" rx="23" ry="25" fill="url(#rg)" fill-opacity="0.333"/><ellipse cx="818" cy="704" rx="23" ry="21" fill="url(#rg)" fill-opacity="0.322"/><ellipse cx="759" cy="790" rx="44" ry="44" fill="url(#rg)" fill-opacity="0.220"/><ellipse cx="1235" cy="719" rx="74" ry="52" fill="url(#rg)" fill-opacity="0.273"/><ellipse cx="1325" cy="677" rx="32" ry="25" fill="url(#rg)" fill-opacity="0.273"/><ellipse cx="1422" cy="689" rx="37" ry="33" fill="url(#rg)" fill-opacity="0.273"/><ellipse cx="1480" cy="650" rx="47" ry="47" fill="url(#rg)" fill-opacity="0.224"/><ellipse cx="1330" cy="720" rx="160" ry="115" fill="url(#rg)" fill-opacity="0.143"/><ellipse cx="1260" cy="640" rx="60" ry="40" fill="url(#rg)" fill-opacity="0.158"/><ellipse cx="1560" cy="780" rx="68" ry="46" fill="url(#rg)" fill-opacity="0.090"/><ellipse cx="1300" cy="820" rx="58" ry="23" fill="url(#rg)" fill-opacity="0.158"/><ellipse cx="1586" cy="150" rx="42" ry="40" fill="url(#rg)" fill-opacity="0.124"/><ellipse cx="1690" cy="290" rx="23" ry="60" fill="url(#rg)" fill-opacity="0.257"/><ellipse cx="1650" cy="330" rx="30" ry="34" fill="url(#rg)" fill-opacity="0.158"/><ellipse cx="1855" cy="160" rx="30" ry="17" fill="url(#rg)" fill-opacity="0.187"/><ellipse cx="1900" cy="200" rx="19" ry="58" fill="url(#rg)" fill-opacity="0.124"/><ellipse cx="1000" cy="530" rx="34" ry="28" fill="url(#rg)" fill-opacity="0.224"/><ellipse cx="1130" cy="480" rx="40" ry="34" fill="url(#rg)" fill-opacity="0.151"/><ellipse cx="1110" cy="545" rx="44" ry="21" fill="url(#rg)" fill-opacity="0.187"/></g>
<g filter="url(#fOL)"><ellipse cx="925" cy="240" rx="85" ry="100" fill="url(#rg)" fill-opacity="0.275"/><ellipse cx="890" cy="355" rx="58" ry="62" fill="url(#rg)" fill-opacity="0.315"/><ellipse cx="940" cy="480" rx="48" ry="68" fill="url(#rg)" fill-opacity="0.212"/><ellipse cx="1185" cy="150" rx="90" ry="52" fill="url(#rg)" fill-opacity="0.212"/><ellipse cx="1130" cy="240" rx="58" ry="62" fill="url(#rg)" fill-opacity="0.353"/><ellipse cx="1220" cy="300" rx="105" ry="105" fill="url(#rg)" fill-opacity="0.379"/><ellipse cx="1320" cy="260" rx="95" ry="85" fill="url(#rg)" fill-opacity="0.337"/><ellipse cx="1400" cy="200" rx="64" ry="72" fill="url(#rg)" fill-opacity="0.316"/><ellipse cx="1350" cy="370" rx="95" ry="62" fill="url(#rg)" fill-opacity="0.279"/><ellipse cx="1170" cy="400" rx="72" ry="46" fill="url(#rg)" fill-opacity="0.293"/><ellipse cx="1400" cy="440" rx="46" ry="56" fill="url(#rg)" fill-opacity="0.205"/><ellipse cx="1290" cy="150" rx="52" ry="36" fill="url(#rg)" fill-opacity="0.162"/><ellipse cx="610" cy="707" rx="23" ry="40" fill="url(#rg)" fill-opacity="0.303"/><ellipse cx="517" cy="786" rx="23" ry="25" fill="url(#rg)" fill-opacity="0.233"/><ellipse cx="826" cy="588" rx="40" ry="40" fill="url(#rg)" fill-opacity="0.303"/><ellipse cx="845" cy="659" rx="23" ry="25" fill="url(#rg)" fill-opacity="0.303"/><ellipse cx="818" cy="704" rx="23" ry="21" fill="url(#rg)" fill-opacity="0.289"/><ellipse cx="759" cy="790" rx="44" ry="44" fill="url(#rg)" fill-opacity="0.346"/><ellipse cx="1235" cy="719" rx="74" ry="52" fill="url(#rg)" fill-opacity="0.247"/><ellipse cx="1325" cy="677" rx="32" ry="25" fill="url(#rg)" fill-opacity="0.247"/><ellipse cx="1422" cy="689" rx="37" ry="33" fill="url(#rg)" fill-opacity="0.247"/><ellipse cx="1480" cy="650" rx="47" ry="47" fill="url(#rg)" fill-opacity="0.205"/><ellipse cx="1330" cy="720" rx="160" ry="115" fill="url(#rg)" fill-opacity="0.124"/><ellipse cx="1260" cy="640" rx="60" ry="40" fill="url(#rg)" fill-opacity="0.137"/><ellipse cx="1560" cy="780" rx="68" ry="46" fill="url(#rg)" fill-opacity="0.174"/><ellipse cx="1300" cy="820" rx="58" ry="23" fill="url(#rg)" fill-opacity="0.137"/><ellipse cx="1586" cy="150" rx="42" ry="40" fill="url(#rg)" fill-opacity="0.225"/><ellipse cx="1601" cy="190" rx="7" ry="62" fill="url(#rg)" fill-opacity="0.341"/><ellipse cx="1690" cy="290" rx="23" ry="60" fill="url(#rg)" fill-opacity="0.233"/><ellipse cx="1650" cy="330" rx="30" ry="34" fill="url(#rg)" fill-opacity="0.137"/><ellipse cx="1715" cy="410" rx="9" ry="72" fill="url(#rg)" fill-opacity="0.210"/><ellipse cx="1855" cy="160" rx="30" ry="17" fill="url(#rg)" fill-opacity="0.162"/><ellipse cx="1900" cy="200" rx="19" ry="58" fill="url(#rg)" fill-opacity="0.225"/><ellipse cx="1000" cy="530" rx="34" ry="28" fill="url(#rg)" fill-opacity="0.205"/><ellipse cx="1130" cy="480" rx="40" ry="34" fill="url(#rg)" fill-opacity="0.255"/><ellipse cx="1110" cy="545" rx="44" ry="21" fill="url(#rg)" fill-opacity="0.162"/></g>
<g filter="url(#fDK)"><ellipse cx="925" cy="240" rx="85" ry="100" fill="url(#rg)" fill-opacity="0.138"/><ellipse cx="890" cy="355" rx="58" ry="62" fill="url(#rg)" fill-opacity="0.345"/><ellipse cx="940" cy="480" rx="48" ry="68" fill="url(#rg)" fill-opacity="0.233"/><ellipse cx="1185" cy="150" rx="90" ry="52" fill="url(#rg)" fill-opacity="0.094"/><ellipse cx="1130" cy="240" rx="58" ry="62" fill="url(#rg)" fill-opacity="0.181"/><ellipse cx="1220" cy="300" rx="105" ry="105" fill="url(#rg)" fill-opacity="0.419"/><ellipse cx="1320" cy="260" rx="95" ry="85" fill="url(#rg)" fill-opacity="0.370"/><ellipse cx="1400" cy="200" rx="64" ry="72" fill="url(#rg)" fill-opacity="0.149"/><ellipse cx="1350" cy="370" rx="95" ry="62" fill="url(#rg)" fill-opacity="0.148"/><ellipse cx="1170" cy="400" rx="72" ry="46" fill="url(#rg)" fill-opacity="0.327"/><ellipse cx="1400" cy="440" rx="46" ry="56" fill="url(#rg)" fill-opacity="0.089"/><ellipse cx="1290" cy="150" rx="52" ry="36" fill="url(#rg)" fill-opacity="0.069"/><ellipse cx="610" cy="707" rx="23" ry="40" fill="url(#rg)" fill-opacity="0.158"/><ellipse cx="517" cy="786" rx="23" ry="25" fill="url(#rg)" fill-opacity="0.109"/><ellipse cx="826" cy="588" rx="40" ry="40" fill="url(#rg)" fill-opacity="0.158"/><ellipse cx="845" cy="659" rx="23" ry="25" fill="url(#rg)" fill-opacity="0.158"/><ellipse cx="818" cy="704" rx="23" ry="21" fill="url(#rg)" fill-opacity="0.148"/><ellipse cx="759" cy="790" rx="44" ry="44" fill="url(#rg)" fill-opacity="0.174"/><ellipse cx="1235" cy="719" rx="74" ry="52" fill="url(#rg)" fill-opacity="0.119"/><ellipse cx="1325" cy="677" rx="32" ry="25" fill="url(#rg)" fill-opacity="0.119"/><ellipse cx="1422" cy="689" rx="37" ry="33" fill="url(#rg)" fill-opacity="0.119"/><ellipse cx="1480" cy="650" rx="47" ry="47" fill="url(#rg)" fill-opacity="0.089"/><ellipse cx="1330" cy="720" rx="160" ry="115" fill="url(#rg)" fill-opacity="0.052"/><ellipse cx="1260" cy="640" rx="60" ry="40" fill="url(#rg)" fill-opacity="0.057"/><ellipse cx="1560" cy="780" rx="68" ry="46" fill="url(#rg)" fill-opacity="0.067"/><ellipse cx="1300" cy="820" rx="58" ry="23" fill="url(#rg)" fill-opacity="0.057"/><ellipse cx="1586" cy="150" rx="42" ry="40" fill="url(#rg)" fill-opacity="0.093"/><ellipse cx="1690" cy="290" rx="23" ry="60" fill="url(#rg)" fill-opacity="0.109"/><ellipse cx="1650" cy="330" rx="30" ry="34" fill="url(#rg)" fill-opacity="0.057"/><ellipse cx="1855" cy="160" rx="30" ry="17" fill="url(#rg)" fill-opacity="0.069"/><ellipse cx="1900" cy="200" rx="19" ry="58" fill="url(#rg)" fill-opacity="0.093"/><ellipse cx="1000" cy="530" rx="34" ry="28" fill="url(#rg)" fill-opacity="0.089"/><ellipse cx="1130" cy="480" rx="40" ry="34" fill="url(#rg)" fill-opacity="0.112"/><ellipse cx="1110" cy="545" rx="44" ry="21" fill="url(#rg)" fill-opacity="0.069"/><ellipse cx="1790" cy="600" rx="14" ry="45" fill="url(#rg)" fill-opacity="0.288"/></g>
<g shape-rendering="crispEdges" fill="none" stroke-width="1" transform="translate(0,0.5)">
<path stroke="#b8c0c8" d="M555 767h1M556 768h1M557 768h1M559 769h1M560 766h1M572 764h1M573 765h1M577 764h1M581 764h1M581 766h1M582 764h1M589 761h1M589 763h1M602 758h1M608 759h1M619 756h1M625 755h1M629 755h1M632 756h1M635 754h1M636 754h1M741 415h1M741 416h1M744 417h1M745 414h1M747 414h1M748 413h1M750 413h1M751 412h1M763 412h1M763 414h1M767 409h1M768 409h1M775 410h1M776 409h1M782 406h1M783 407h1M789 406h1M792 405h1M793 406h1M795 404h1M800 404h1M805 404h1M806 403h1M808 403h1M819 399h1M821 403h1M822 400h1M832 400h1M834 398h1M835 397h1M841 395h1M845 396h1M911 573h1M918 573h1M921 568h1M924 578h1M929 574h1M929 576h1M931 572h1M938 579h1M940 573h1M941 575h1M946 575h1M947 574h1M953 572h1M954 573h1M957 573h1M970 570h1M977 364h1M979 363h1M979 573h1M980 364h1M984 365h1M984 571h1M987 364h1M988 366h1M989 364h1M990 364h1M990 574h1M992 365h1M993 364h1M993 570h1M996 363h1M996 574h1M1000 364h1M1002 570h1M1008 573h1M1012 364h1M1012 569h1M1013 365h1M1014 361h1M1016 571h1M1017 362h1M1026 361h1M1032 573h1M1033 360h1M1034 360h1M1035 360h1M1036 361h1M1036 362h1M1036 574h1M1039 361h1M1042 359h1M1043 358h1M1046 361h1M1047 361h1M1049 359h1M1050 360h1M1059 359h1M1065 357h1M1072 568h1M1073 358h1M1073 359h1M1078 356h1M1078 565h1M1078 566h1M1078 570h1M1080 358h1M1081 358h1M1083 574h1M1088 571h1M1089 572h1M1093 576h1"/>
<path stroke="#c8ced6" d="M557 769h1M559 767h1M564 767h1M569 764h1M576 763h1M576 764h1M579 765h1M585 762h1M586 762h1M593 762h1M610 759h1M630 757h1M631 756h1M746 413h1M747 413h1M767 411h1M769 411h1M772 408h1M782 410h1M786 410h1M789 407h1M798 403h1M798 404h1M815 401h1M818 401h1M820 400h1M828 397h1M829 399h1M836 396h1M837 396h1M843 397h1M846 396h1M850 395h1M920 568h1M920 579h1M929 572h1M948 573h1M950 574h1M955 573h1M956 567h1M956 572h1M967 572h1M974 572h1M974 578h1M984 362h1M984 365h1M987 572h1M987 581h1M989 573h1M992 364h1M997 573h1M1000 575h1M1013 574h1M1018 362h1M1019 575h1M1023 361h1M1027 362h1M1028 362h1M1028 574h1M1029 362h1M1031 360h1M1035 360h1M1036 568h1M1038 359h1M1038 361h1M1042 361h1M1046 568h1M1050 360h1M1052 361h1M1057 359h1M1058 570h1M1061 359h1M1062 358h1M1062 579h1M1064 572h1M1066 359h1M1067 359h1M1067 569h1M1070 568h1M1073 356h1M1075 355h1M1080 566h1M1089 570h1M1091 566h1M1094 570h1"/>
<path stroke="#a0aab4" d="M549 768h1M553 770h1M559 768h1M564 767h1M566 766h1M571 767h1M573 763h1M574 764h1M574 765h1M584 762h1M594 761h1M595 761h1M597 759h1M605 759h1M606 760h1M610 758h1M610 759h1M628 756h1M629 756h1M630 753h1M631 754h1M740 414h1M748 413h1M748 414h1M750 414h1M763 410h1M767 410h1M772 407h1M775 409h1M777 409h1M779 407h1M779 409h1M782 407h1M786 408h1M787 407h1M797 405h1M799 406h1M800 402h1M801 404h1M803 405h1M806 403h1M810 400h1M810 403h1M815 402h1M816 404h1M818 400h1M821 400h1M823 399h1M825 400h1M828 399h1M828 402h1M833 399h1M843 395h1M846 396h1M848 395h1M848 396h1M921 576h1M924 574h1M924 578h1M927 580h1M930 578h1M941 575h1M947 576h1M962 570h1M971 572h1M972 576h1M982 364h1M988 571h1M992 361h1M992 364h1M992 573h1M992 574h1M995 364h1M997 365h1M1005 363h1M1006 363h1M1008 362h1M1012 363h1M1013 359h1M1015 570h1M1018 362h1M1021 365h1M1022 362h1M1023 364h1M1027 360h1M1028 361h1M1031 362h1M1033 364h1M1034 569h1M1037 574h1M1042 569h1M1047 359h1M1048 360h1M1048 572h1M1055 572h1M1057 571h1M1060 360h1M1060 570h1M1063 572h1M1065 360h1M1066 359h1M1071 572h1M1075 358h1M1077 357h1M1078 356h1M1078 358h1M1078 570h1M1082 360h1M1084 358h1"/>
<path stroke="#d03050" d="M1245 500h1M1245 503h1M1246 501h1M1246 502h1M1247 506h1M1247 507h1M1248 498h1M1248 499h1M1248 500h1M1248 504h1M1251 501h1M1251 503h1M1253 505h1M1253 507h1M1254 500h1M1255 502h1M1255 505h1M1255 506h1M1256 501h1M1256 507h1M1257 502h1M1258 506h1M1260 506h1M1261 500h1M1264 501h1M1264 502h1M1264 506h1M1266 503h1M1266 506h1M1268 500h1M1268 508h1M1270 500h1M1270 506h1M1271 499h1M1271 504h1M1272 498h1M1272 499h1M1272 503h1M1272 507h1M1274 503h1"/>
<path stroke="#2030c0" d="M728 890h1M728 892h1M728 893h1M728 898h1M729 890h1M729 891h1M729 892h1M729 894h1M729 896h1M730 891h1M730 893h1M731 888h1M731 890h1M731 891h1M731 896h1M733 890h1M733 896h1M734 895h1M735 892h1M735 894h1M735 896h1M736 894h1M737 890h1M738 895h1M738 896h1"/>
</g>
<g stroke="#e8e83c" stroke-width="1" stroke-opacity="0.92" fill="none">
<path d="M454.2 640.5L1555.0 602.5"/>
<path d="M454.2 640.5L539.3 915.4"/>
<path d="M539.3 915.4L1639.4 877.2"/>
<path d="M1639.4 877.2L1555.0 602.5"/>
<path d="M454.2 640.5L795.2 56.9"/>
<path d="M539.3 915.4L929.4 249.4"/>
<path d="M929.4 249.4L878.5 82.1"/>
<path d="M929.4 249.4L2030.0 211.0"/>
<path d="M1555.0 602.5L1871.8 60.8"/>
<path d="M1639.4 877.2L2030.0 211.0"/>
</g>
<circle cx="377.8" cy="115.4" r="1.15" fill="#8a6a4a"/>
<circle cx="381.5" cy="116.4" r="1.15" fill="#3a3020"/>
<circle cx="384.2" cy="119.1" r="1.15" fill="#1a1410"/>
<circle cx="385.2" cy="122.8" r="1.15" fill="#0a0a0a"/>
<circle cx="384.2" cy="126.5" r="1.15" fill="#000"/>
<circle cx="381.5" cy="129.2" r="1.15" fill="#fff"/>
<circle cx="377.8" cy="130.2" r="1.15" fill="#fff"/>
<circle cx="374.1" cy="129.2" r="1.15" fill="#f0f0f0"/>
<circle cx="371.4" cy="126.5" r="1.15" fill="#c8c0b0"/>
<circle cx="370.4" cy="122.8" r="1.15" fill="#b0a890"/>
<circle cx="371.4" cy="119.1" r="1.15" fill="#a09070"/>
<circle cx="374.1" cy="116.4" r="1.15" fill="#907858"/>
<path d="M1163.5 548.5H1174.5M1168.5 543V554" stroke="#a8b8c8" stroke-width="1" shape-rendering="crispEdges"/>
<path d="M1537.5 970.5H1932.5M1537.5 968V973M1932.5 968V973" stroke="#d4d4d4" stroke-width="1" shape-rendering="crispEdges"/>
<path d="M1952.4 970.3L1940 970.7" stroke="#40e040" stroke-width="1.6"/><path d="M1952.4 970.3L1949.5 959.8" stroke="#40a8f0" stroke-width="1.6"/><path d="M1952.4 970.3L1958 962.5" stroke="#f03020" stroke-width="1.6"/>
</svg>
  </div>
</div>
<div class="abs" style="left:365px;top:988px;width:1608px;height:1px;background:#d0d0d0;"></div>

<!-- CONSOLE DOCK -->
<div class="abs" style="left:41px;top:989px;width:1932px;height:158px;background:#ececec;"></div>
<div class="docktitle" style="left:41px;top:989px;width:1932px;height:26px;line-height:25px;"></div>
<div class="dockbtn" style="left:44px;top:994px;"><svg width="16" height="16" viewBox="0 0 16 16"><path d="M5 5 L11 11 M11 5 L5 11" stroke="#fff" stroke-width="2.2" stroke-linecap="round"/></svg></div>
<div class="dockbtn" style="left:64px;top:994px;"><svg width="16" height="16" viewBox="0 0 16 16"><rect x="6.2" y="5" width="5.6" height="4.2" rx="1" fill="none" stroke="#fff" stroke-width="1.2"/><rect x="4.2" y="7" width="5.6" height="4.2" rx="1" fill="#3f3f3f" stroke="#fff" stroke-width="1.2"/></svg></div>
<div class="box" id="consbox" style="left:55px;top:1029px;width:1905px;height:104px;">
</div>

<div class="abs" style="left:56px;top:1030px;width:1903px;height:102px;overflow:hidden;">
<div class="crow g" style="top:-14.2px;"></div>
<div class="crow"   style="top:5.2px;"></div>
<div class="crow g" style="top:24.7px;"></div>
<div class="crow"   style="top:44.2px;"></div>
<div class="crow g" style="top:63.7px;"></div>
<div class="crow"   style="top:83.2px;"></div>
</div>

<!-- STATUS BAR -->
<div id="statusbar" class="abs"></div>
<!-- PAGES TOOLTIP -->
<div class="abs" style="left:1040.8px;top:1128.2px;width:75.3px;height:30.8px;border-radius:4.5px;background:#e4e2e2;box-shadow:0 0 0 0.5px #c2c0c0,0 1.5px 5px rgba(0,0,0,.25);"></div>
<svg class="abs" style="left:1066px;top:1158px" width="26" height="13" viewBox="1066 1158 26 13"><path d="M1069.8 1158.6 L1078.3 1168.4 L1087.4 1158.6 Z" fill="#e4e2e2"/><path d="M1069.8 1159 L1078.3 1168.6 L1087.4 1159" fill="none" stroke="#bdbbbb" stroke-width="0.6"/></svg>
<div class="abs" style="left:0;top:0;width:2048px;height:1174px;will-change:transform;-webkit-text-stroke:0.22px currentColor;">
<div class="t" style="left:876.90px;top:2.65px;font-size:15.3px;color:#3e3e3e;letter-spacing:0.212px;font-weight:bold;">CloudCompare v2.11.1 (Anoia) [64-bit]</div>
<div class="t" style="left:188.00px;top:83.56px;font-size:13.4px;color:#262626;letter-spacing:-0.304px;">DB Tree</div>
<div class="t" style="left:180.70px;top:539.76px;font-size:13.4px;color:#262626;letter-spacing:0.141px;">Properties</div>
<div class="t" style="left:1003.75px;top:995.66px;font-size:13.4px;color:#262626;letter-spacing:-0.190px;">Console</div>
<div class="t" style="left:1134.80px;top:86.48px;font-size:15.5px;color:#262626;letter-spacing:-0.359px;">3D View 1</div>
<div class="t" style="left:144.40px;top:122.68px;font-size:15.5px;color:#111;letter-spacing:0.106px;">2020_Drone_M.las (/User...</div>
<div class="t" style="left:167.60px;top:147.88px;font-size:15.5px;color:#111;letter-spacing:0.183px;">2020_Drone_M - Cloud</div>
<div class="t" style="left:144.40px;top:173.18px;font-size:15.5px;color:#111;letter-spacing:0.178px;">parking-lot-updated.e57 (/...</div>
<div class="t" style="left:61.10px;top:576.16px;font-size:13.4px;color:#2a2a2a;letter-spacing:0.184px;">Property</div>
<div class="t" style="left:193.10px;top:576.16px;font-size:13.4px;color:#2a2a2a;letter-spacing:0.205px;">State/Value</div>
<div class="t" style="left:56.80px;top:596.58px;font-size:15.5px;color:#fff;letter-spacing:-0.100px;">CC Object</div>
<div class="t" style="left:62.20px;top:616.28px;font-size:15.5px;color:#111;letter-spacing:-0.453px;">Name</div>
<div class="abs" style="left:56px;top:574px;width:292px;height:400px;overflow:hidden;"><div class="t" style="left:138.50px;top:42.28px;font-size:15.5px;color:#111;letter-spacing:0.183px;">2020_Drone_M - Cloud</div></div>
<div class="t" style="left:62.20px;top:638.28px;font-size:15.5px;color:#111;letter-spacing:0.085px;">Visible</div>
<div class="t" style="left:62.20px;top:661.58px;font-size:15.5px;color:#111;letter-spacing:-0.194px;">Show name (in ...</div>
<div class="t" style="left:62.20px;top:691.08px;font-size:15.5px;color:#111;letter-spacing:-0.099px;">Colors</div>
<div class="t" style="left:228.00px;top:690.18px;font-size:15.5px;color:#111;letter-spacing:-2.047px;">RGB</div>
<div class="t" style="left:194.50px;top:719.98px;font-size:15.5px;color:#111;letter-spacing:0.202px;">X: 105.635</div>
<div class="t" style="left:194.50px;top:738.48px;font-size:15.5px;color:#111;letter-spacing:-0.803px;">Y: 107.122</div>
<div class="t" style="left:194.50px;top:756.38px;font-size:15.5px;color:#111;letter-spacing:0.312px;">Z: 29.472</div>
<div class="t" style="left:62.20px;top:738.48px;font-size:15.5px;color:#111;letter-spacing:-0.109px;">Box dimensions</div>
<div class="t" style="left:194.50px;top:777.48px;font-size:15.5px;color:#111;letter-spacing:0.302px;">X: 79.2955</div>
<div class="t" style="left:194.50px;top:795.68px;font-size:15.5px;color:#111;letter-spacing:0.048px;">Y: 95.023</div>
<div class="t" style="left:194.50px;top:814.08px;font-size:15.5px;color:#111;letter-spacing:0.189px;">Z: 15.85</div>
<div class="t" style="left:62.20px;top:795.68px;font-size:15.5px;color:#111;letter-spacing:-0.028px;">Shifted box cen...</div>
<div class="t" style="left:194.50px;top:834.68px;font-size:15.5px;color:#111;letter-spacing:0.433px;">X: 79.295502</div>
<div class="t" style="left:194.50px;top:853.08px;font-size:15.5px;color:#111;letter-spacing:0.302px;">Y: 95.023003</div>
<div class="t" style="left:194.50px;top:871.38px;font-size:15.5px;color:#111;letter-spacing:0.376px;">Z: 15.850000</div>
<div class="t" style="left:62.20px;top:853.08px;font-size:15.5px;color:#111;letter-spacing:-0.078px;">Global box cent...</div>
<div class="t" style="left:62.20px;top:892.28px;font-size:15.5px;color:#111;letter-spacing:-0.053px;">Info</div>
<div class="abs" style="left:56px;top:574px;width:292px;height:400px;overflow:hidden;"><div class="t" style="left:138.50px;top:318.28px;font-size:15.5px;color:#111;letter-spacing:0.150px;">Object ID: 260 - Children: 0</div></div>
<div class="t" style="left:62.20px;top:920.58px;font-size:15.5px;color:#111;letter-spacing:0.035px;">Current Display</div>
<div class="t" style="left:205.30px;top:919.68px;font-size:15.5px;color:#111;letter-spacing:-0.297px;">3D View 1</div>
<div class="t" style="left:56.80px;top:950.08px;font-size:15.5px;color:#fff;letter-spacing:-0.200px;">Cloud</div>
<div class="abs" style="left:56px;top:574px;width:292px;height:400px;overflow:hidden;"><div class="t" style="left:6.20px;top:394.98px;font-size:15.5px;color:#111;letter-spacing:0.181px;">Points</div></div>
<div class="abs" style="left:56px;top:574px;width:292px;height:400px;overflow:hidden;"><div class="t" style="left:138.50px;top:394.98px;font-size:15.5px;color:#111;letter-spacing:0.491px;">20,456,365</div></div>
<div class="abs" style="left:56px;top:1030px;width:1903px;height:102px;overflow:hidden;"><div class="t" style="left:6.50px;top:-12.77px;font-size:15.2px;color:#111;letter-spacing:0.110px;">[09:58:29] [Picked]</div></div>
<div class="abs" style="left:56px;top:1030px;width:1903px;height:102px;overflow:hidden;"><div class="t" style="left:190.00px;top:-12.77px;font-size:15.2px;color:#111;letter-spacing:-0.470px;">- Global coordinates: (95.215004;88.430000;3.2)</div></div>
<div class="t" style="left:62.50px;top:1036.63px;font-size:15.2px;color:#111;letter-spacing:0.110px;">[09:58:29] [Picked]</div>
<div class="t" style="left:246.00px;top:1036.63px;font-size:15.2px;color:#111;letter-spacing:-0.238px;">- Color: (194;189;186;255)</div>
<div class="t" style="left:62.50px;top:1055.73px;font-size:15.2px;color:#111;letter-spacing:0.110px;">[09:58:29] [Picked]</div>
<div class="t" style="left:246.00px;top:1055.73px;font-size:15.2px;color:#111;letter-spacing:-0.043px;">- Intensity = 0.255207</div>
<div class="t" style="left:62.50px;top:1075.23px;font-size:15.2px;color:#8a1c14;letter-spacing:-0.128px;">[09:58:49] [ccPickingHub::addListener] Exclusive listener already registered: stop the other tool relying on point picking first</div>
<div class="t" style="left:62.50px;top:1094.73px;font-size:15.2px;color:#e62a20;letter-spacing:-0.104px;">[09:58:49] Can&#x27;t start the picking mechanism (another tool is already using it)</div>
<div class="t" style="left:62.50px;top:1114.23px;font-size:15.2px;color:#111;letter-spacing:-0.286px;">[10:47:01] Defaut point size is already at minimum : 1</div>
<div class="t" style="left:1056.60px;top:1134.90px;font-size:16.3px;color:#1c1c1c;letter-spacing:-0.618px;">Pages</div>
<div class="t" style="left:1985.20px;top:425.77px;font-size:12.2px;color:#262626;letter-spacing:-0.205px;">CSF Filter</div>
<div class="t" style="left:1728.90px;top:971.84px;font-size:12px;color:#e8e8e8;letter-spacing:-0.359px;">35</div>
</div>
</body></html>
